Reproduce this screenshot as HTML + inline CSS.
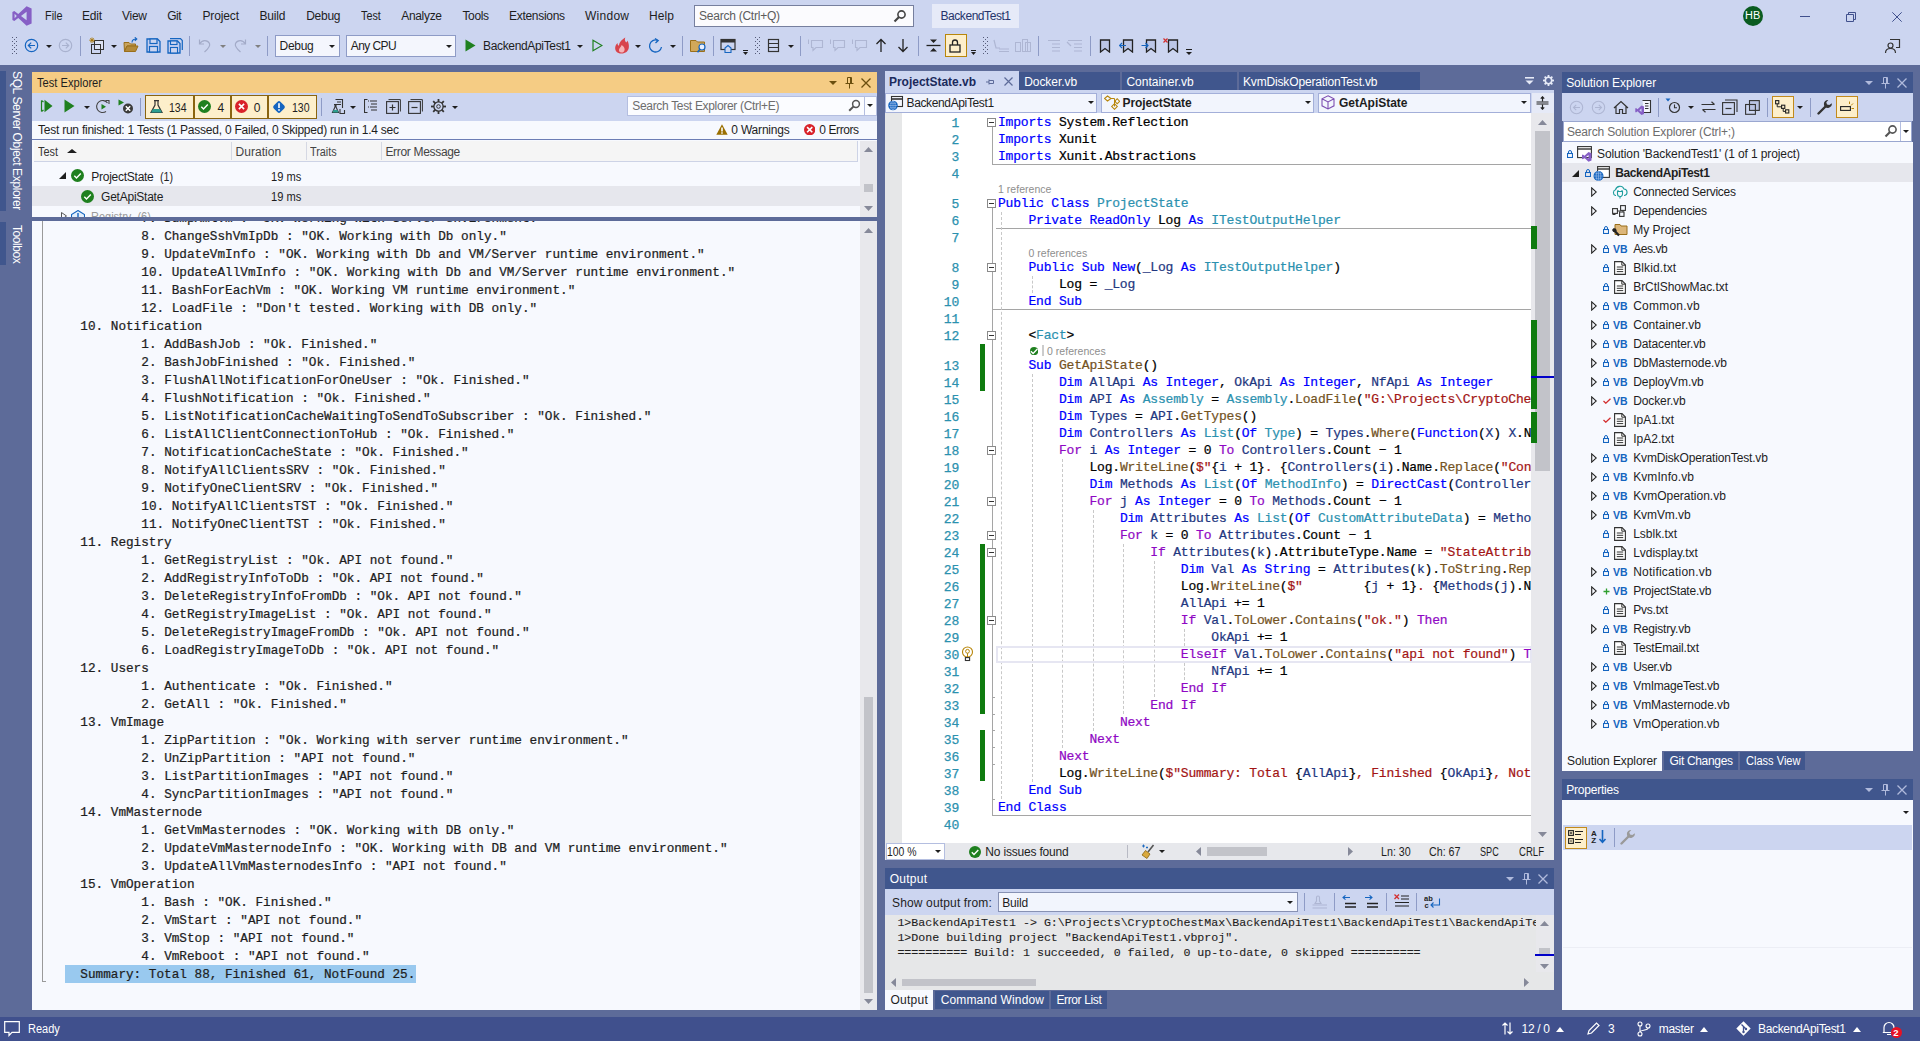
<!DOCTYPE html>
<html><head><meta charset="utf-8"><title>VS</title><style>
html,body{margin:0;padding:0;}
body{width:1920px;height:1041px;position:relative;overflow:hidden;background:#5D6B99;font-family:"Liberation Sans",sans-serif;font-size:12px;}
body div,body svg,.t{position:absolute;}
.t{white-space:nowrap;display:block;}
.ln{-webkit-text-stroke:0.25px;font-family:"Liberation Mono",monospace;font-size:13px;line-height:17px;letter-spacing:-0.2px;color:#2B91AF;text-align:right;}
.cl{-webkit-text-stroke:0.22px;font-family:"Liberation Mono",monospace;font-size:13px;line-height:17px;letter-spacing:-0.185px;color:#000;white-space:pre;}
.cl span{position:static;}
</style></head>
<body>
<div style="left:0px;top:65px;width:1920px;height:952px;background:#5D6B99;"></div>
<div style="left:0px;top:0px;width:1920px;height:65px;background:#CCD5F0;"></div>
<svg style="left:12px;top:6px;" width="20" height="20" viewBox="0 0 20 20"><path d="M14.6 0.3 L19.6 2.4 V17.6 L14.6 19.7 L6.3 11.9 L2.3 15 L0.4 14 V6 L2.3 5 L6.3 8.1 Z M14.6 5.7 L9 10 L14.6 14.3 Z M2.6 7.8 V12.2 L4.8 10 Z" fill="#865FC5" fill-rule="evenodd"/></svg>
<span class="t" style="left:44.5px;top:7.84px;font-size:12px;line-height:16px;color:#1e1e1e;transform:scaleX(0.9050);transform-origin:0 0;">File</span>
<span class="t" style="left:82px;top:7.84px;font-size:12px;line-height:16px;color:#1e1e1e;letter-spacing:-0.226px;">Edit</span>
<span class="t" style="left:122px;top:7.84px;font-size:12px;line-height:16px;color:#1e1e1e;letter-spacing:-0.265px;">View</span>
<span class="t" style="left:167.2px;top:7.84px;font-size:12px;line-height:16px;color:#1e1e1e;letter-spacing:-0.417px;">Git</span>
<span class="t" style="left:202.5px;top:7.84px;font-size:12px;line-height:16px;color:#1e1e1e;letter-spacing:-0.142px;">Project</span>
<span class="t" style="left:259.5px;top:7.84px;font-size:12px;line-height:16px;color:#1e1e1e;letter-spacing:-0.171px;">Build</span>
<span class="t" style="left:306.2px;top:7.84px;font-size:12px;line-height:16px;color:#1e1e1e;letter-spacing:-0.266px;">Debug</span>
<span class="t" style="left:361.2px;top:7.84px;font-size:12px;line-height:16px;color:#1e1e1e;transform:scaleX(0.8997);transform-origin:0 0;">Test</span>
<span class="t" style="left:401.2px;top:7.84px;font-size:12px;line-height:16px;color:#1e1e1e;letter-spacing:-0.315px;">Analyze</span>
<span class="t" style="left:462.5px;top:7.84px;font-size:12px;line-height:16px;color:#1e1e1e;letter-spacing:-0.379px;">Tools</span>
<span class="t" style="left:509px;top:7.84px;font-size:12px;line-height:16px;color:#1e1e1e;letter-spacing:-0.3px;">Extensions</span>
<span class="t" style="left:585px;top:7.84px;font-size:12px;line-height:16px;color:#1e1e1e;letter-spacing:0.264px;">Window</span>
<span class="t" style="left:649px;top:7.84px;font-size:12px;line-height:16px;color:#1e1e1e;letter-spacing:0.106px;">Help</span>
<div style="left:694px;top:5px;width:218px;height:20px;background:#FBFBFE;border:1px solid #767F9E;box-sizing:content-box;"></div>
<span class="t" style="left:699px;top:7.84px;font-size:12px;line-height:16px;color:#5c5c5c;letter-spacing:-0.24px;">Search (Ctrl+Q)</span>
<svg style="left:893px;top:9px;" width="14" height="14" viewBox="0 0 14 14"><circle cx="8.5" cy="5.5" r="3.6" fill="none" stroke="#444" stroke-width="1.6"/><path d="M6 8 L1.5 12.5" stroke="#444" stroke-width="2.2"/></svg>
<div style="left:932px;top:4px;width:87px;height:24px;background:#E6EAF8;"></div>
<span class="t" style="left:940.5px;top:7.84px;font-size:12px;line-height:16px;color:#25346B;letter-spacing:-0.444px;">BackendTest1</span>
<div style="left:1743px;top:6px;width:20px;height:20px;background:#0A5C20;border-radius:10px;"></div>
<span class="t" style="left:1745.3px;top:10.14px;font-size:10px;line-height:12px;color:#ffffff;transform:scaleX(1.0941);transform-origin:0 0;">HB</span>
<div style="left:1800px;top:16px;width:10px;height:1px;background:#40508D;"></div>
<svg style="left:1846px;top:12px;" width="10" height="10" viewBox="0 0 10 10"><path d="M0.5 2.5H7.5V9.5H0.5Z M2.5 2.5V0.5H9.5V7.5H7.5" fill="none" stroke="#40508D" stroke-width="1"/></svg>
<svg style="left:1892px;top:12px;" width="10" height="10" viewBox="0 0 10 10"><path d="M0.3 0.3L9.7 9.7M9.7 0.3L0.3 9.7" stroke="#40508D" stroke-width="1" fill="none"/></svg>
<svg style="left:12px;top:37px;" width="5" height="18" viewBox="0 0 5 18"><rect x="0" y="0" width="1" height="1" fill="#555b78"/><rect x="4" y="0" width="1" height="1" fill="#555b78" opacity="1"/><rect x="2" y="2" width="1" height="1" fill="#555b78"/><rect x="2" y="2" width="1" height="1" fill="#555b78" opacity="0"/><rect x="0" y="4" width="1" height="1" fill="#555b78"/><rect x="4" y="4" width="1" height="1" fill="#555b78" opacity="1"/><rect x="2" y="6" width="1" height="1" fill="#555b78"/><rect x="2" y="6" width="1" height="1" fill="#555b78" opacity="0"/><rect x="0" y="8" width="1" height="1" fill="#555b78"/><rect x="4" y="8" width="1" height="1" fill="#555b78" opacity="1"/><rect x="2" y="10" width="1" height="1" fill="#555b78"/><rect x="2" y="10" width="1" height="1" fill="#555b78" opacity="0"/><rect x="0" y="12" width="1" height="1" fill="#555b78"/><rect x="4" y="12" width="1" height="1" fill="#555b78" opacity="1"/><rect x="2" y="14" width="1" height="1" fill="#555b78"/><rect x="2" y="14" width="1" height="1" fill="#555b78" opacity="0"/><rect x="0" y="16" width="1" height="1" fill="#555b78"/><rect x="4" y="16" width="1" height="1" fill="#555b78" opacity="1"/></svg>
<svg style="left:24px;top:38px;" width="15" height="15" viewBox="0 0 15 15"><circle cx="7.5" cy="7.5" r="6.2" fill="none" stroke="#1565C0" stroke-width="1.2"/><path d="M11 7.5H4.5M7.2 4.6L4.3 7.5L7.2 10.4" fill="none" stroke="#1565C0" stroke-width="1.2"/></svg>
<svg style="left:46px;top:45px;" width="6" height="3" viewBox="0 0 6 3"><path d="M0 0H6L3.0 3Z" fill="#1e1e1e"/></svg>
<svg style="left:58px;top:38px;" width="15" height="15" viewBox="0 0 15 15"><circle cx="7.5" cy="7.5" r="6.2" fill="none" stroke="#A9B2CF" stroke-width="1.2"/><path d="M4 7.5H10.5M7.8 4.6L10.7 7.5L7.8 10.4" fill="none" stroke="#A9B2CF" stroke-width="1.2"/></svg>
<div style="left:80px;top:36px;width:1px;height:20px;background:#8E9BC6;"></div>
<svg style="left:89px;top:37px;" width="17" height="17" viewBox="0 0 17 17"><rect x="5.5" y="3.5" width="9" height="9" fill="#DDE2F3" stroke="#333" stroke-width="1"/><rect x="2.5" y="7.5" width="9" height="9" fill="none" stroke="#333" stroke-width="1"/><path d="M3 0.5V6M0.3 3.2H5.8M1.1 1.3L5 5.2M5 1.3L1.1 5.2" stroke="#A87400" stroke-width="0.9"/></svg>
<svg style="left:111px;top:45px;" width="6" height="3" viewBox="0 0 6 3"><path d="M0 0H6L3.0 3Z" fill="#1e1e1e"/></svg>
<svg style="left:123px;top:37px;" width="17" height="17" viewBox="0 0 17 17"><path d="M1 5.5H6L7.5 7H12.5V9H4L1.5 14.5Z" fill="#C9A45E" stroke="#9A6F1A" stroke-width="1"/><path d="M1.5 14.5L4 9H15L12.5 14.5Z" fill="#B38A3A" stroke="#9A6F1A" stroke-width="1"/><path d="M9 5.5C9 3 11 2 13.5 2M11.8 0.3L13.8 2L11.8 3.8" fill="none" stroke="#1565C0" stroke-width="1.1"/></svg>
<svg style="left:146px;top:38px;" width="15" height="15" viewBox="0 0 15 15"><path d="M1 1H11.5L14 3.5V14H1Z" fill="#C4CFF0" stroke="#1565C0" stroke-width="1.3"/><rect x="4" y="1" width="7" height="4.5" fill="#CCD5F0" stroke="#1565C0" stroke-width="1.2"/><rect x="3.5" y="8.5" width="8" height="5.5" fill="#CCD5F0" stroke="#1565C0" stroke-width="1.2"/></svg>
<svg style="left:167px;top:38px;" width="16" height="16" viewBox="0 0 16 16"><path d="M3 0.7H13.5L15.3 2.5V12" fill="none" stroke="#1565C0" stroke-width="1.2"/><path d="M1 3H10.5L13 5.5V15H1Z" fill="#C4CFF0" stroke="#1565C0" stroke-width="1.3"/><rect x="3.5" y="3" width="6.5" height="3.5" fill="#CCD5F0" stroke="#1565C0" stroke-width="1.1"/><rect x="3.5" y="9.5" width="7" height="5.5" fill="#CCD5F0" stroke="#1565C0" stroke-width="1.1"/></svg>
<div style="left:189px;top:36px;width:1px;height:20px;background:#8E9BC6;"></div>
<svg style="left:198px;top:38px;" width="14" height="15" viewBox="0 0 14 15"><path d="M1.5 1.5V6H6" fill="none" stroke="#A3ABC8" stroke-width="1.2"/><path d="M1.8 5.8C4 1.5 9.5 1.5 11.5 5.5C12.5 8 10 11 6.5 14" fill="none" stroke="#A3ABC8" stroke-width="1.2"/></svg>
<svg style="left:220px;top:45px;" width="6" height="3" viewBox="0 0 6 3"><path d="M0 0H6L3.0 3Z" fill="#808080"/></svg>
<svg style="left:233px;top:38px;" width="14" height="15" viewBox="0 0 14 15"><path d="M12.5 1.5V6H8" fill="none" stroke="#A3ABC8" stroke-width="1.2"/><path d="M12.2 5.8C10 1.5 4.5 1.5 2.5 5.5C1.5 8 4 11 7.5 14" fill="none" stroke="#A3ABC8" stroke-width="1.2"/></svg>
<svg style="left:255px;top:45px;" width="6" height="3" viewBox="0 0 6 3"><path d="M0 0H6L3.0 3Z" fill="#808080"/></svg>
<div style="left:267px;top:36px;width:1px;height:20px;background:#8E9BC6;"></div>
<div style="left:275px;top:35px;width:63px;height:20px;background:#F4F6FD;border:1px solid #8E9BC6;box-sizing:content-box;"></div>
<span class="t" style="left:279.5px;top:38.34px;font-size:12px;line-height:16px;color:#1e1e1e;letter-spacing:-0.291px;">Debug</span>
<svg style="left:329px;top:45px;" width="6" height="3" viewBox="0 0 6 3"><path d="M0 0H6L3.0 3Z" fill="#1e1e1e"/></svg>
<div style="left:346px;top:35px;width:108px;height:20px;background:#F4F6FD;border:1px solid #8E9BC6;box-sizing:content-box;"></div>
<span class="t" style="left:350.7px;top:38.34px;font-size:12px;line-height:16px;color:#1e1e1e;letter-spacing:-0.558px;">Any CPU</span>
<svg style="left:446px;top:45px;" width="6" height="3" viewBox="0 0 6 3"><path d="M0 0H6L3.0 3Z" fill="#1e1e1e"/></svg>
<svg style="left:465px;top:39px;" width="11" height="13" viewBox="0 0 11 13"><path d="M0.5 0.5L10.5 6.5L0.5 12.5Z" fill="#1F801F"/></svg>
<span class="t" style="left:483px;top:38.34px;font-size:12px;line-height:16px;color:#1e1e1e;letter-spacing:-0.338px;">BackendApiTest1</span>
<svg style="left:577px;top:45px;" width="6" height="3" viewBox="0 0 6 3"><path d="M0 0H6L3.0 3Z" fill="#1e1e1e"/></svg>
<svg style="left:592px;top:39px;" width="11" height="13" viewBox="0 0 11 13"><path d="M1 1.2L10 6.5L1 11.8Z" fill="none" stroke="#1F801F" stroke-width="1.2"/></svg>
<svg style="left:614px;top:37px;" width="16" height="17" viewBox="0 0 16 17"><path d="M7.5 16.6C3 16.6 0.8 13.5 1.2 10.2C1.5 8 2.8 6.8 3.6 6C3.4 7.6 4.2 8.6 5 8.6C5.2 5 8 2.8 11.3 0.6C10.5 2.6 10.8 4 12.2 5.6C13 4.8 13.2 4 13.2 3.4C14.6 5.4 15.2 8 14.8 10.8C14.3 14.2 11.6 16.6 7.5 16.6Z" fill="#D8444C"/><path d="M7.6 15.6C5.4 15.6 4.4 13.8 5.2 12C5.8 10.6 7.4 9.6 7.6 8C9.6 9.4 11 11.2 10.6 13C10.2 14.8 9 15.6 7.6 15.6Z" fill="#F5B5B8"/></svg>
<svg style="left:635px;top:45px;" width="6" height="3" viewBox="0 0 6 3"><path d="M0 0H6L3.0 3Z" fill="#1e1e1e"/></svg>
<svg style="left:648px;top:38px;" width="16" height="16" viewBox="0 0 16 16"><path d="M13.5 9A6 6 0 1 1 9.5 2.3" fill="none" stroke="#1565C0" stroke-width="1.3"/><path d="M7 0.5L10.2 2.5L7.5 5" fill="none" stroke="#1565C0" stroke-width="1.3"/></svg>
<svg style="left:670px;top:45px;" width="6" height="3" viewBox="0 0 6 3"><path d="M0 0H6L3.0 3Z" fill="#1e1e1e"/></svg>
<div style="left:682px;top:36px;width:1px;height:20px;background:#8E9BC6;"></div>
<svg style="left:690px;top:38px;" width="18" height="16" viewBox="0 0 18 16"><path d="M0.5 2.5H6L7.5 4H14.5V13.5H0.5Z" fill="#D1A85A" stroke="#9A6F1A" stroke-width="1"/><circle cx="12" cy="9" r="3" fill="#EAF0FF" stroke="#1565C0" stroke-width="1.2"/><path d="M10 11.2L7.5 14.2" stroke="#1565C0" stroke-width="1.6"/></svg>
<div style="left:713px;top:36px;width:1px;height:20px;background:#8E9BC6;"></div>
<svg style="left:720px;top:38px;" width="17" height="16" viewBox="0 0 17 16"><rect x="1" y="1.5" width="14" height="10" fill="none" stroke="#333" stroke-width="1.2"/><rect x="1" y="1.5" width="14" height="3" fill="#333"/><path d="M5 14.5V10L8 7.5L11 10V14.5Z" fill="#CCD5F0" stroke="#1565C0" stroke-width="1.1"/></svg>
<div style="left:743px;top:50px;width:5px;height:1px;background:#1e1e1e;"></div>
<svg style="left:743px;top:52px;" width="5" height="3" viewBox="0 0 5 3"><path d="M0 0H5L2.5 3Z" fill="#1e1e1e"/></svg>
<svg style="left:755px;top:37px;" width="5" height="18" viewBox="0 0 5 18"><rect x="0" y="0" width="1" height="1" fill="#555b78"/><rect x="4" y="0" width="1" height="1" fill="#555b78" opacity="1"/><rect x="2" y="2" width="1" height="1" fill="#555b78"/><rect x="2" y="2" width="1" height="1" fill="#555b78" opacity="0"/><rect x="0" y="4" width="1" height="1" fill="#555b78"/><rect x="4" y="4" width="1" height="1" fill="#555b78" opacity="1"/><rect x="2" y="6" width="1" height="1" fill="#555b78"/><rect x="2" y="6" width="1" height="1" fill="#555b78" opacity="0"/><rect x="0" y="8" width="1" height="1" fill="#555b78"/><rect x="4" y="8" width="1" height="1" fill="#555b78" opacity="1"/><rect x="2" y="10" width="1" height="1" fill="#555b78"/><rect x="2" y="10" width="1" height="1" fill="#555b78" opacity="0"/><rect x="0" y="12" width="1" height="1" fill="#555b78"/><rect x="4" y="12" width="1" height="1" fill="#555b78" opacity="1"/><rect x="2" y="14" width="1" height="1" fill="#555b78"/><rect x="2" y="14" width="1" height="1" fill="#555b78" opacity="0"/><rect x="0" y="16" width="1" height="1" fill="#555b78"/><rect x="4" y="16" width="1" height="1" fill="#555b78" opacity="1"/></svg>
<svg style="left:767px;top:38px;" width="14" height="16" viewBox="0 0 14 16"><rect x="1.5" y="1.5" width="10" height="12" fill="none" stroke="#333" stroke-width="1.2"/><path d="M1.5 5.5H11.5M1.5 9.5H11.5" stroke="#333" stroke-width="1.2"/></svg>
<svg style="left:788px;top:45px;" width="6" height="3" viewBox="0 0 6 3"><path d="M0 0H6L3.0 3Z" fill="#1e1e1e"/></svg>
<div style="left:800px;top:36px;width:1px;height:20px;background:#8E9BC6;"></div>
<svg style="left:808px;top:39px;" width="16" height="13" viewBox="0 0 16 13"><path d="M3.5 1.5H14.5V8.5H8L5 11.5V8.5H3.5Z" fill="none" stroke="#AEB6D3" stroke-width="1.1"/><path d="M0.5 0.5V5" stroke="#AEB6D3" stroke-width="1"/></svg>
<svg style="left:830px;top:39px;" width="16" height="13" viewBox="0 0 16 13"><path d="M3.5 1.5H14.5V8.5H8L5 11.5V8.5H3.5Z" fill="none" stroke="#AEB6D3" stroke-width="1.1"/><path d="M0.5 0.5V5" stroke="#AEB6D3" stroke-width="1"/></svg>
<svg style="left:852px;top:39px;" width="16" height="13" viewBox="0 0 16 13"><path d="M3.5 1.5H14.5V8.5H8L5 11.5V8.5H3.5Z" fill="none" stroke="#AEB6D3" stroke-width="1.1"/><path d="M0.5 0.5V5" stroke="#AEB6D3" stroke-width="1"/></svg>
<svg style="left:875px;top:38px;" width="12" height="15" viewBox="0 0 12 15"><path d="M6 14V1.5M1.5 6L6 1.5L10.5 6" fill="none" stroke="#222" stroke-width="1.3"/></svg>
<svg style="left:897px;top:38px;" width="12" height="15" viewBox="0 0 12 15"><path d="M6 1V13.5M1.5 9L6 13.5L10.5 9" fill="none" stroke="#222" stroke-width="1.3"/></svg>
<div style="left:918px;top:36px;width:1px;height:20px;background:#8E9BC6;"></div>
<svg style="left:926px;top:38px;" width="15" height="15" viewBox="0 0 15 15"><path d="M0.5 7.5H14.5" stroke="#222" stroke-width="1.3"/><path d="M4 1.5H11L7.5 5Z M4 13.5H11L7.5 10Z" fill="#222"/></svg>
<div style="left:945px;top:34px;width:20px;height:21px;background:#FDEFCB;border:1px solid #B8860B;box-sizing:content-box;"></div>
<svg style="left:949px;top:39px;" width="12" height="14" viewBox="0 0 12 14"><rect x="1" y="6" width="10" height="7" fill="none" stroke="#222" stroke-width="1.3"/><path d="M3.5 6V3.5A2.5 2.5 0 0 1 8.5 3.5V6" fill="none" stroke="#222" stroke-width="1.3"/></svg>
<div style="left:971px;top:50px;width:5px;height:1px;background:#1e1e1e;"></div>
<svg style="left:971px;top:52px;" width="5" height="3" viewBox="0 0 5 3"><path d="M0 0H5L2.5 3Z" fill="#1e1e1e"/></svg>
<svg style="left:983px;top:37px;" width="5" height="18" viewBox="0 0 5 18"><rect x="0" y="0" width="1" height="1" fill="#555b78"/><rect x="4" y="0" width="1" height="1" fill="#555b78" opacity="1"/><rect x="2" y="2" width="1" height="1" fill="#555b78"/><rect x="2" y="2" width="1" height="1" fill="#555b78" opacity="0"/><rect x="0" y="4" width="1" height="1" fill="#555b78"/><rect x="4" y="4" width="1" height="1" fill="#555b78" opacity="1"/><rect x="2" y="6" width="1" height="1" fill="#555b78"/><rect x="2" y="6" width="1" height="1" fill="#555b78" opacity="0"/><rect x="0" y="8" width="1" height="1" fill="#555b78"/><rect x="4" y="8" width="1" height="1" fill="#555b78" opacity="1"/><rect x="2" y="10" width="1" height="1" fill="#555b78"/><rect x="2" y="10" width="1" height="1" fill="#555b78" opacity="0"/><rect x="0" y="12" width="1" height="1" fill="#555b78"/><rect x="4" y="12" width="1" height="1" fill="#555b78" opacity="1"/><rect x="2" y="14" width="1" height="1" fill="#555b78"/><rect x="2" y="14" width="1" height="1" fill="#555b78" opacity="0"/><rect x="0" y="16" width="1" height="1" fill="#555b78"/><rect x="4" y="16" width="1" height="1" fill="#555b78" opacity="1"/></svg>
<svg style="left:993px;top:39px;" width="18" height="14" viewBox="0 0 18 14"><path d="M1 1L3 9H7" fill="none" stroke="#AEB6D3" stroke-width="1.2"/><path d="M6 10H16M6 12.5H16" stroke="#AEB6D3" stroke-width="1.2"/></svg>
<svg style="left:1015px;top:39px;" width="18" height="14" viewBox="0 0 18 14"><rect x="0.5" y="3.5" width="5" height="9" fill="none" stroke="#AEB6D3"/><rect x="7.5" y="0.5" width="5" height="12" fill="none" stroke="#AEB6D3"/><rect x="10.5" y="3.5" width="5" height="9" fill="none" stroke="#AEB6D3"/></svg>
<div style="left:1038px;top:36px;width:1px;height:20px;background:#8E9BC6;"></div>
<svg style="left:1045px;top:39px;" width="16" height="14" viewBox="0 0 16 14"><path d="M3 1.5H15M7 5H15M7 8.5H15M7 12H15" stroke="#AEB6D3" stroke-width="1.2"/></svg>
<svg style="left:1066px;top:39px;" width="17" height="14" viewBox="0 0 17 14"><path d="M2 1.5H16M8 5H16M8 8.5H16M8 12H16M1 3L5 7" stroke="#AEB6D3" stroke-width="1.2"/></svg>
<div style="left:1090px;top:36px;width:1px;height:20px;background:#8E9BC6;"></div>
<svg style="left:1099px;top:39px;" width="12" height="14" viewBox="0 0 12 14"><path d="M1.5 1H10.5V13L6 9.5L1.5 13Z" fill="#BCC6E6" stroke="#222" stroke-width="1.3"/></svg>
<svg style="left:1119px;top:39px;" width="16" height="14" viewBox="0 0 16 14"><path d="M4.5 1H13.5V13L9 9.5L4.5 13Z" fill="#BCC6E6" stroke="#222" stroke-width="1.3"/><path d="M7 6.5H0.5M3 4L0.5 6.5L3 9" fill="none" stroke="#1565C0" stroke-width="1.2"/></svg>
<svg style="left:1141px;top:39px;" width="16" height="14" viewBox="0 0 16 14"><path d="M5.5 1H14.5V13L10 9.5L5.5 13Z" fill="#BCC6E6" stroke="#222" stroke-width="1.3"/><path d="M0.5 6.5H7M4.5 4L7 6.5L4.5 9" fill="none" stroke="#1565C0" stroke-width="1.2"/></svg>
<svg style="left:1163px;top:38px;" width="16" height="15" viewBox="0 0 16 15"><path d="M5.5 2H14.5V14L10 10.5L5.5 14Z" fill="#BCC6E6" stroke="#222" stroke-width="1.3"/><path d="M0.5 0.5L4.5 4.5M4.5 0.5L0.5 4.5" stroke="#D32F2F" stroke-width="1.2"/></svg>
<div style="left:1186px;top:49px;width:6px;height:1px;background:#1e1e1e;"></div>
<svg style="left:1186px;top:52px;" width="6" height="3" viewBox="0 0 6 3"><path d="M0 0H6L3.0 3Z" fill="#1e1e1e"/></svg>
<svg style="left:1884px;top:38px;" width="17" height="16" viewBox="0 0 17 16"><path d="M6 1.5H15.5V9.5H12" fill="none" stroke="#333" stroke-width="1.2"/><circle cx="6.5" cy="7.5" r="2.5" fill="none" stroke="#333" stroke-width="1.2"/><path d="M1.5 15C1.5 11.5 4 10.5 6.5 10.5C9 10.5 11.5 11.5 11.5 15" fill="none" stroke="#333" stroke-width="1.2"/></svg>
<div style="left:0px;top:71px;width:6px;height:140px;background:#40568D;"></div>
<div style="left:0px;top:222px;width:6px;height:43px;background:#40568D;"></div>
<span class="t" style="left:9px;top:71.3px;font-size:12px;line-height:16px;color:#fff;writing-mode:vertical-rl;letter-spacing:-0.36px;">SQL Server Object Explorer</span>
<span class="t" style="left:9px;top:224.6px;font-size:12px;line-height:16px;color:#fff;writing-mode:vertical-rl;letter-spacing:-0.44px;">Toolbox</span>
<div style="left:32px;top:72px;width:845px;height:21px;background:#F5CC84;"></div>
<span class="t" style="left:36.8px;top:74.84px;font-size:12px;line-height:16px;color:#1e1e1e;transform:scaleX(0.9282);transform-origin:0 0;">Test Explorer</span>
<svg style="left:829px;top:80.5px;" width="8" height="4" viewBox="0 0 8 4"><path d="M0 0H8L4.0 4Z" fill="#6B4F0E"/></svg>
<svg style="left:845px;top:76.5px;" width="9" height="12" viewBox="0 0 9 12"><path d="M2.5 0.5H6.5V6.5H2.5ZM5.5 0.5V6.5M0.5 6.5H8.5M4.5 6.5V11.5" fill="none" stroke="#6B4F0E" stroke-width="1"/></svg>
<svg style="left:861px;top:77.5px;" width="10" height="10" viewBox="0 0 10 10"><path d="M0.5 0.5L9.5 9.5M9.5 0.5L0.5 9.5" stroke="#6B4F0E" stroke-width="1.3"/></svg>
<div style="left:32px;top:93px;width:845px;height:28px;background:#CCD5F0;"></div>
<svg style="left:40px;top:99px;" width="13" height="14" viewBox="0 0 13 14"><path d="M1.5 1.5V12.5M1.5 1.5L3.5 3M1.5 12.5L3.5 11" fill="none" stroke="#1F801F" stroke-width="1.2"/><path d="M4.5 0.8L12.5 7L4.5 13.2Z" fill="#1F801F"/></svg>
<svg style="left:64px;top:99px;" width="11" height="14" viewBox="0 0 11 14"><path d="M0.5 0.5L10.5 7L0.5 13.5Z" fill="#1F801F"/></svg>
<svg style="left:84px;top:106px;" width="6" height="3" viewBox="0 0 6 3"><path d="M0 0H6L3.0 3Z" fill="#1e1e1e"/></svg>
<svg style="left:96px;top:99px;" width="15" height="15" viewBox="0 0 15 15"><path d="M10 12.5A6 6 0 1 1 11.5 4" fill="none" stroke="#444" stroke-width="1.1"/><path d="M9.5 1.5H13V5" fill="none" stroke="#444" stroke-width="1.1"/><path d="M5.5 5L10 7.7L5.5 10.4Z" fill="#1F801F"/></svg>
<svg style="left:118px;top:99px;" width="16" height="15" viewBox="0 0 16 15"><path d="M0.5 0.5L6 3.5L0.5 6.5Z" fill="#1F801F"/><circle cx="10" cy="9.5" r="5" fill="#3a3a3a"/><path d="M7.8 7.3L12.2 11.7M12.2 7.3L7.8 11.7" stroke="#fff" stroke-width="1.5"/></svg>
<div style="left:140px;top:98px;width:1px;height:18px;background:#8E9BC6;"></div>
<div style="left:145px;top:95px;width:170px;height:22px;background:#FDEFCB;border:1px solid #8A6410;box-sizing:content-box;"></div>
<div style="left:193px;top:96px;width:2px;height:22px;background:#8A6410;"></div>
<div style="left:230px;top:96px;width:2px;height:22px;background:#8A6410;"></div>
<div style="left:267px;top:96px;width:2px;height:22px;background:#8A6410;"></div>
<svg style="left:150px;top:100px;" width="13" height="14" viewBox="0 0 13 14"><path d="M4 0.7H9M5 0.7V5L1 12.5H12L8 5V0.7" fill="none" stroke="#333" stroke-width="1.2"/><path d="M3 9H10L12 12.5H1Z" fill="#2E9E8F"/></svg>
<span class="t" style="left:168.6px;top:99.84px;font-size:12px;line-height:16px;color:#1e1e1e;transform:scaleX(0.8790);transform-origin:0 0;">134</span>
<svg style="left:198.0px;top:100.0px;" width="13.0" height="13.0" viewBox="0 0 13.0 13.0"><circle cx="6.5" cy="6.5" r="6.5" fill="#1F801F"/><path d="M3.3 6.7L5.5 8.9L9.8 4.5" fill="none" stroke="#fff" stroke-width="1.4"/></svg>
<span class="t" style="left:217.5px;top:99.84px;font-size:12px;line-height:16px;color:#1e1e1e;">4</span>
<svg style="left:235.0px;top:100.0px;" width="13.0" height="13.0" viewBox="0 0 13.0 13.0"><circle cx="6.5" cy="6.5" r="6.5" fill="#D9222A"/><path d="M3.9 3.9L9.1 9.1M9.1 3.9L3.9 9.1" fill="none" stroke="#fff" stroke-width="1.6"/></svg>
<span class="t" style="left:253.7px;top:99.84px;font-size:12px;line-height:16px;color:#1e1e1e;">0</span>
<svg style="left:271.5px;top:99.5px;" width="14" height="14" viewBox="0 0 14 14"><rect x="2.3" y="2.3" width="9.4" height="9.4" rx="2" fill="#1565C0" transform="rotate(45 7 7)"/><rect x="6.2" y="3.2" width="1.6" height="4.8" fill="#fff"/><rect x="6.2" y="9.2" width="1.6" height="1.6" fill="#fff"/></svg>
<span class="t" style="left:291.8px;top:99.84px;font-size:12px;line-height:16px;color:#1e1e1e;transform:scaleX(0.8790);transform-origin:0 0;">130</span>
<div style="left:321px;top:98px;width:1px;height:18px;background:#8E9BC6;"></div>
<svg style="left:331px;top:99px;" width="15" height="15" viewBox="0 0 15 15"><path d="M4.5 0.5H11.5V9" fill="none" stroke="#333" stroke-width="1.1"/><path d="M6 3H10M6 5.5H10" stroke="#333" stroke-width="1"/><path d="M3 5.5H6M4 5.5V8L1.5 13.5H7.5L5 8V5.5" fill="none" stroke="#333" stroke-width="1.1"/><path d="M2.5 11H6.5L7.5 13.5H1.5Z" fill="#2E9E8F"/><path d="M9 10V14.5H13.5V11" fill="none" stroke="#333" stroke-width="1.1"/></svg>
<svg style="left:350px;top:106px;" width="6" height="3" viewBox="0 0 6 3"><path d="M0 0H6L3.0 3Z" fill="#1e1e1e"/></svg>
<svg style="left:364px;top:99px;" width="14" height="14" viewBox="0 0 14 14"><path d="M3.5 0.5H0.5V13.5H3.5" fill="none" stroke="#333" stroke-width="1.1"/><path d="M6 2H13M7 5H13M6 8H13M7 11H13" stroke="#333" stroke-width="1.1"/><path d="M4 2H5M4 8H5" stroke="#333" stroke-width="1.1"/></svg>
<svg style="left:386px;top:99px;" width="15" height="15" viewBox="0 0 15 15"><rect x="0.6" y="2.6" width="11.8" height="11.8" fill="none" stroke="#333" stroke-width="1.1"/><path d="M2.5 0.6H14.4V12.5" fill="none" stroke="#333" stroke-width="1"/><path d="M3.5 8.5H9.5M6.5 5.5V11.5" stroke="#333" stroke-width="1.2"/></svg>
<svg style="left:408px;top:99px;" width="15" height="15" viewBox="0 0 15 15"><rect x="0.6" y="2.6" width="11.8" height="11.8" fill="none" stroke="#333" stroke-width="1.1"/><path d="M2.5 0.6H14.4V12.5" fill="none" stroke="#333" stroke-width="1"/><path d="M3.5 8.5H9.5" stroke="#333" stroke-width="1.2"/></svg>
<svg style="left:431px;top:99px;" width="15" height="15" viewBox="0 0 15 15"><rect x="6.6" y="0" width="1.8" height="3" fill="#333" transform="rotate(0 7.5 7.5)"/><rect x="6.6" y="0" width="1.8" height="3" fill="#333" transform="rotate(45 7.5 7.5)"/><rect x="6.6" y="0" width="1.8" height="3" fill="#333" transform="rotate(90 7.5 7.5)"/><rect x="6.6" y="0" width="1.8" height="3" fill="#333" transform="rotate(135 7.5 7.5)"/><rect x="6.6" y="0" width="1.8" height="3" fill="#333" transform="rotate(180 7.5 7.5)"/><rect x="6.6" y="0" width="1.8" height="3" fill="#333" transform="rotate(225 7.5 7.5)"/><rect x="6.6" y="0" width="1.8" height="3" fill="#333" transform="rotate(270 7.5 7.5)"/><rect x="6.6" y="0" width="1.8" height="3" fill="#333" transform="rotate(315 7.5 7.5)"/><circle cx="7.5" cy="7.5" r="4.6" fill="none" stroke="#333" stroke-width="1.3"/><circle cx="7.5" cy="7.5" r="1.8" fill="none" stroke="#333" stroke-width="1"/></svg>
<svg style="left:452px;top:106px;" width="6" height="3" viewBox="0 0 6 3"><path d="M0 0H6L3.0 3Z" fill="#1e1e1e"/></svg>
<div style="left:627px;top:96px;width:248px;height:18px;background:#FBFCFF;border:1px solid #B4BEE0;box-sizing:content-box;"></div>
<div style="left:864px;top:97px;width:1px;height:18px;background:#B4BEE0;"></div>
<span class="t" style="left:632.3px;top:97.84px;font-size:12px;line-height:16px;color:#6d6d6d;letter-spacing:-0.324px;">Search Test Explorer (Ctrl+E)</span>
<svg style="left:848px;top:99px;" width="13" height="13" viewBox="0 0 13 13"><circle cx="8" cy="5" r="3.4" fill="none" stroke="#555" stroke-width="1.5"/><path d="M5.6 7.4L1.2 11.8" stroke="#555" stroke-width="2"/></svg>
<svg style="left:867px;top:104px;" width="6" height="3" viewBox="0 0 6 3"><path d="M0 0H6L3.0 3Z" fill="#1e1e1e"/></svg>
<div style="left:32px;top:121px;width:845px;height:96px;background:#F7F9FE;"></div>
<span class="t" style="left:38px;top:121.84px;font-size:12px;line-height:16px;color:#1e1e1e;letter-spacing:-0.236px;">Test run finished: 1 Tests (1 Passed, 0 Failed, 0 Skipped) run in 1.4 sec</span>
<svg style="left:716px;top:124px;" width="12" height="11" viewBox="0 0 12 11"><path d="M6 0.3L11.7 10.7H0.3Z" fill="#9A6F00"/><rect x="5.2" y="3.5" width="1.6" height="4" fill="#fff"/><rect x="5.2" y="8.3" width="1.6" height="1.4" fill="#fff"/></svg>
<span class="t" style="left:731.3px;top:121.84px;font-size:12px;line-height:16px;color:#1e1e1e;letter-spacing:-0.194px;">0 Warnings</span>
<svg style="left:803.8px;top:123.8px;" width="11.4" height="11.4" viewBox="0 0 11.4 11.4"><circle cx="5.7" cy="5.7" r="5.7" fill="#D9222A"/><path d="M3.1 3.1L8.3 8.3M8.3 3.1L3.1 8.3" fill="none" stroke="#fff" stroke-width="1.6"/></svg>
<span class="t" style="left:819.3px;top:121.84px;font-size:12px;line-height:16px;color:#1e1e1e;letter-spacing:-0.411px;">0 Errors</span>
<div style="left:32px;top:139px;width:845px;height:1px;background:#6C7DB5;"></div>
<div style="left:34px;top:141px;width:824px;height:20px;background:#F5F5F5;border-bottom:1px solid #CDD3E6;"></div>
<div style="left:857px;top:141px;width:1px;height:20px;background:#CDD3E6;"></div>
<div style="left:231px;top:142px;width:1px;height:18px;background:#D5D8E3;"></div>
<div style="left:306px;top:142px;width:1px;height:18px;background:#D5D8E3;"></div>
<div style="left:381px;top:142px;width:1px;height:18px;background:#D5D8E3;"></div>
<span class="t" style="left:38.4px;top:143.84px;font-size:12px;line-height:16px;color:#333;transform:scaleX(0.9088);transform-origin:0 0;">Test</span>
<svg style="left:67px;top:149.3px;" width="10" height="4" viewBox="0 0 10 4"><path d="M0 4L5 0L10 4Z" fill="#1e1e1e"/></svg>
<span class="t" style="left:235.5px;top:143.84px;font-size:12px;line-height:16px;color:#444;letter-spacing:0.034px;">Duration</span>
<span class="t" style="left:310.4px;top:143.84px;font-size:12px;line-height:16px;color:#444;transform:scaleX(0.9034);transform-origin:0 0;">Traits</span>
<span class="t" style="left:385.4px;top:143.84px;font-size:12px;line-height:16px;color:#444;letter-spacing:-0.316px;">Error Message</span>
<div style="left:32px;top:162px;width:828px;height:55px;background:#F7F9FE;"></div>
<div style="left:32px;top:186px;width:828px;height:20px;background:#E6E7ED;"></div>
<svg style="left:59px;top:172px;" width="7" height="7" viewBox="0 0 7 7"><path d="M7 0V7H0Z" fill="#1e1e1e"/></svg>
<svg style="left:71.0px;top:169.0px;" width="13.0" height="13.0" viewBox="0 0 13.0 13.0"><circle cx="6.5" cy="6.5" r="6.5" fill="#1F801F"/><path d="M3.3 6.7L5.5 8.9L9.8 4.5" fill="none" stroke="#fff" stroke-width="1.4"/></svg>
<span class="t" style="left:91.3px;top:168.84px;font-size:12px;line-height:16px;color:#1e1e1e;letter-spacing:-0.261px;">ProjectState</span>
<span class="t" style="left:159.5px;top:168.84px;font-size:12px;line-height:16px;color:#1e1e1e;transform:scaleX(0.8863);transform-origin:0 0;">(1)</span>
<span class="t" style="left:270.5px;top:168.84px;font-size:12px;line-height:16px;color:#1e1e1e;transform:scaleX(0.9272);transform-origin:0 0;">19 ms</span>
<svg style="left:81.0px;top:189.5px;" width="13.0" height="13.0" viewBox="0 0 13.0 13.0"><circle cx="6.5" cy="6.5" r="6.5" fill="#1F801F"/><path d="M3.3 6.7L5.5 8.9L9.8 4.5" fill="none" stroke="#fff" stroke-width="1.4"/></svg>
<span class="t" style="left:101.1px;top:188.84px;font-size:12px;line-height:16px;color:#1e1e1e;letter-spacing:-0.241px;">GetApiState</span>
<span class="t" style="left:270.5px;top:188.84px;font-size:12px;line-height:16px;color:#1e1e1e;transform:scaleX(0.9272);transform-origin:0 0;">19 ms</span>
<div style="left:32px;top:206px;width:828px;height:11px;overflow:hidden;"><svg style="left:29px;top:6px;" width="7" height="8" viewBox="0 0 7 8"><path d="M0.5 0.5L5.5 4L0.5 7.5Z" fill="none" stroke="#555" stroke-width="1"/></svg><svg style="left:39px;top:4px;" width="14" height="14" viewBox="0 0 14 14"><path d="M7 0.5L13.5 4.5V9.5L7 13.5L0.5 9.5V4.5Z" fill="#E3EEFB" stroke="#1565C0" stroke-width="1.1"/><rect x="6.3" y="3" width="1.4" height="8" fill="#1565C0"/></svg><span class="t" style="left:59.3px;top:2.84px;font-size:12px;line-height:16px;color:#9a9a9a;white-space:pre;transform:scaleX(0.9167);transform-origin:0 0;">Registry  (6)</span></div>
<div style="left:860px;top:141px;width:17px;height:76px;background:#E8E8EC;"></div>
<svg style="left:864px;top:147px;" width="9" height="5" viewBox="0 0 9 5"><path d="M0 5L4.5 0L9 5Z" fill="#868999"/></svg>
<div style="left:864px;top:184px;width:9px;height:8px;background:#C2C3C9;"></div>
<svg style="left:864px;top:206px;" width="9" height="5" viewBox="0 0 9 5"><path d="M0 0L4.5 5L9 0Z" fill="#868999"/></svg>
<div style="left:32px;top:221px;width:845px;height:789px;background:#F7F9FE;"></div>
<div style="left:860px;top:221px;width:17px;height:789px;background:#E8E8EC;"></div>
<svg style="left:864px;top:228px;" width="9" height="5" viewBox="0 0 9 5"><path d="M0 5L4.5 0L9 5Z" fill="#868999"/></svg>
<div style="left:864px;top:697px;width:9px;height:296px;background:#C2C3C9;"></div>
<svg style="left:864px;top:999px;" width="9" height="5" viewBox="0 0 9 5"><path d="M0 0L4.5 5L9 0Z" fill="#868999"/></svg>
<div style="left:42px;top:221px;width:1px;height:760px;background:#9a9a9a;"></div>
<div style="left:42px;top:981px;width:4px;height:1px;background:#9a9a9a;"></div>
<div style="left:65px;top:965px;width:351px;height:18px;background:#99C9EF;"></div>
<div style="left:32px;top:221px;width:828px;height:789px;overflow:hidden;"><span class="t" style="left:109.30000000000001px;top:-11.38px;font-size:12.7px;line-height:18px;color:#1e1e1e;font-family:'Liberation Mono', monospace;-webkit-text-stroke:0.24px;white-space:pre;">7. DumpXmlVm : "OK. Working with Server environment."</span><span class="t" style="left:109.30000000000001px;top:6.62px;font-size:12.7px;line-height:18px;color:#1e1e1e;font-family:'Liberation Mono', monospace;-webkit-text-stroke:0.24px;white-space:pre;">8. ChangeSshVmIpDb : "OK. Working with Db only."</span><span class="t" style="left:109.30000000000001px;top:24.62px;font-size:12.7px;line-height:18px;color:#1e1e1e;font-family:'Liberation Mono', monospace;-webkit-text-stroke:0.24px;white-space:pre;">9. UpdateVmInfo : "OK. Working with Db and VM/Server runtime environment."</span><span class="t" style="left:109.30000000000001px;top:42.62px;font-size:12.7px;line-height:18px;color:#1e1e1e;font-family:'Liberation Mono', monospace;-webkit-text-stroke:0.24px;white-space:pre;">10. UpdateAllVmInfo : "OK. Working with Db and VM/Server runtime environment."</span><span class="t" style="left:109.30000000000001px;top:60.62px;font-size:12.7px;line-height:18px;color:#1e1e1e;font-family:'Liberation Mono', monospace;-webkit-text-stroke:0.24px;white-space:pre;">11. BashForEachVm : "OK. Working VM runtime environment."</span><span class="t" style="left:109.30000000000001px;top:78.62px;font-size:12.7px;line-height:18px;color:#1e1e1e;font-family:'Liberation Mono', monospace;-webkit-text-stroke:0.24px;white-space:pre;">12. LoadFile : "Don't tested. Working with DB only."</span><span class="t" style="left:48.33999999999999px;top:96.62px;font-size:12.7px;line-height:18px;color:#1e1e1e;font-family:'Liberation Mono', monospace;-webkit-text-stroke:0.24px;white-space:pre;">10. Notification</span><span class="t" style="left:109.30000000000001px;top:114.62px;font-size:12.7px;line-height:18px;color:#1e1e1e;font-family:'Liberation Mono', monospace;-webkit-text-stroke:0.24px;white-space:pre;">1. AddBashJob : "Ok. Finished."</span><span class="t" style="left:109.30000000000001px;top:132.62px;font-size:12.7px;line-height:18px;color:#1e1e1e;font-family:'Liberation Mono', monospace;-webkit-text-stroke:0.24px;white-space:pre;">2. BashJobFinished : "Ok. Finished."</span><span class="t" style="left:109.30000000000001px;top:150.62px;font-size:12.7px;line-height:18px;color:#1e1e1e;font-family:'Liberation Mono', monospace;-webkit-text-stroke:0.24px;white-space:pre;">3. FlushAllNotificationForOneUser : "Ok. Finished."</span><span class="t" style="left:109.30000000000001px;top:168.62px;font-size:12.7px;line-height:18px;color:#1e1e1e;font-family:'Liberation Mono', monospace;-webkit-text-stroke:0.24px;white-space:pre;">4. FlushNotification : "Ok. Finished."</span><span class="t" style="left:109.30000000000001px;top:186.62px;font-size:12.7px;line-height:18px;color:#1e1e1e;font-family:'Liberation Mono', monospace;-webkit-text-stroke:0.24px;white-space:pre;">5. ListNotificationCacheWaitingToSendToSubscriber : "Ok. Finished."</span><span class="t" style="left:109.30000000000001px;top:204.62px;font-size:12.7px;line-height:18px;color:#1e1e1e;font-family:'Liberation Mono', monospace;-webkit-text-stroke:0.24px;white-space:pre;">6. ListAllClientConnectionToHub : "Ok. Finished."</span><span class="t" style="left:109.30000000000001px;top:222.62px;font-size:12.7px;line-height:18px;color:#1e1e1e;font-family:'Liberation Mono', monospace;-webkit-text-stroke:0.24px;white-space:pre;">7. NotificationCacheState : "Ok. Finished."</span><span class="t" style="left:109.30000000000001px;top:240.62px;font-size:12.7px;line-height:18px;color:#1e1e1e;font-family:'Liberation Mono', monospace;-webkit-text-stroke:0.24px;white-space:pre;">8. NotifyAllClientsSRV : "Ok. Finished."</span><span class="t" style="left:109.30000000000001px;top:258.62px;font-size:12.7px;line-height:18px;color:#1e1e1e;font-family:'Liberation Mono', monospace;-webkit-text-stroke:0.24px;white-space:pre;">9. NotifyOneClientSRV : "Ok. Finished."</span><span class="t" style="left:109.30000000000001px;top:276.62px;font-size:12.7px;line-height:18px;color:#1e1e1e;font-family:'Liberation Mono', monospace;-webkit-text-stroke:0.24px;white-space:pre;">10. NotifyAllClientsTST : "Ok. Finished."</span><span class="t" style="left:109.30000000000001px;top:294.62px;font-size:12.7px;line-height:18px;color:#1e1e1e;font-family:'Liberation Mono', monospace;-webkit-text-stroke:0.24px;white-space:pre;">11. NotifyOneClientTST : "Ok. Finished."</span><span class="t" style="left:48.33999999999999px;top:312.62px;font-size:12.7px;line-height:18px;color:#1e1e1e;font-family:'Liberation Mono', monospace;-webkit-text-stroke:0.24px;white-space:pre;">11. Registry</span><span class="t" style="left:109.30000000000001px;top:330.62px;font-size:12.7px;line-height:18px;color:#1e1e1e;font-family:'Liberation Mono', monospace;-webkit-text-stroke:0.24px;white-space:pre;">1. GetRegistryList : "Ok. API not found."</span><span class="t" style="left:109.30000000000001px;top:348.62px;font-size:12.7px;line-height:18px;color:#1e1e1e;font-family:'Liberation Mono', monospace;-webkit-text-stroke:0.24px;white-space:pre;">2. AddRegistryInfoToDb : "Ok. API not found."</span><span class="t" style="left:109.30000000000001px;top:366.62px;font-size:12.7px;line-height:18px;color:#1e1e1e;font-family:'Liberation Mono', monospace;-webkit-text-stroke:0.24px;white-space:pre;">3. DeleteRegistryInfoFromDb : "Ok. API not found."</span><span class="t" style="left:109.30000000000001px;top:384.62px;font-size:12.7px;line-height:18px;color:#1e1e1e;font-family:'Liberation Mono', monospace;-webkit-text-stroke:0.24px;white-space:pre;">4. GetRegistryImageList : "Ok. API not found."</span><span class="t" style="left:109.30000000000001px;top:402.62px;font-size:12.7px;line-height:18px;color:#1e1e1e;font-family:'Liberation Mono', monospace;-webkit-text-stroke:0.24px;white-space:pre;">5. DeleteRegistryImageFromDb : "Ok. API not found."</span><span class="t" style="left:109.30000000000001px;top:420.62px;font-size:12.7px;line-height:18px;color:#1e1e1e;font-family:'Liberation Mono', monospace;-webkit-text-stroke:0.24px;white-space:pre;">6. LoadRegistryImageToDb : "Ok. API not found."</span><span class="t" style="left:48.33999999999999px;top:438.62px;font-size:12.7px;line-height:18px;color:#1e1e1e;font-family:'Liberation Mono', monospace;-webkit-text-stroke:0.24px;white-space:pre;">12. Users</span><span class="t" style="left:109.30000000000001px;top:456.62px;font-size:12.7px;line-height:18px;color:#1e1e1e;font-family:'Liberation Mono', monospace;-webkit-text-stroke:0.24px;white-space:pre;">1. Authenticate : "Ok. Finished."</span><span class="t" style="left:109.30000000000001px;top:474.62px;font-size:12.7px;line-height:18px;color:#1e1e1e;font-family:'Liberation Mono', monospace;-webkit-text-stroke:0.24px;white-space:pre;">2. GetAll : "Ok. Finished."</span><span class="t" style="left:48.33999999999999px;top:492.62px;font-size:12.7px;line-height:18px;color:#1e1e1e;font-family:'Liberation Mono', monospace;-webkit-text-stroke:0.24px;white-space:pre;">13. VmImage</span><span class="t" style="left:109.30000000000001px;top:510.62px;font-size:12.7px;line-height:18px;color:#1e1e1e;font-family:'Liberation Mono', monospace;-webkit-text-stroke:0.24px;white-space:pre;">1. ZipPartition : "Ok. Working with server runtime environment."</span><span class="t" style="left:109.30000000000001px;top:528.62px;font-size:12.7px;line-height:18px;color:#1e1e1e;font-family:'Liberation Mono', monospace;-webkit-text-stroke:0.24px;white-space:pre;">2. UnZipPartition : "API not found."</span><span class="t" style="left:109.30000000000001px;top:546.62px;font-size:12.7px;line-height:18px;color:#1e1e1e;font-family:'Liberation Mono', monospace;-webkit-text-stroke:0.24px;white-space:pre;">3. ListPartitionImages : "API not found."</span><span class="t" style="left:109.30000000000001px;top:564.62px;font-size:12.7px;line-height:18px;color:#1e1e1e;font-family:'Liberation Mono', monospace;-webkit-text-stroke:0.24px;white-space:pre;">4. SyncPartitionImages : "API not found."</span><span class="t" style="left:48.33999999999999px;top:582.62px;font-size:12.7px;line-height:18px;color:#1e1e1e;font-family:'Liberation Mono', monospace;-webkit-text-stroke:0.24px;white-space:pre;">14. VmMasternode</span><span class="t" style="left:109.30000000000001px;top:600.62px;font-size:12.7px;line-height:18px;color:#1e1e1e;font-family:'Liberation Mono', monospace;-webkit-text-stroke:0.24px;white-space:pre;">1. GetVmMasternodes : "OK. Working with DB only."</span><span class="t" style="left:109.30000000000001px;top:618.62px;font-size:12.7px;line-height:18px;color:#1e1e1e;font-family:'Liberation Mono', monospace;-webkit-text-stroke:0.24px;white-space:pre;">2. UpdateVmMasternodeInfo : "OK. Working with DB and VM runtime environment."</span><span class="t" style="left:109.30000000000001px;top:636.62px;font-size:12.7px;line-height:18px;color:#1e1e1e;font-family:'Liberation Mono', monospace;-webkit-text-stroke:0.24px;white-space:pre;">3. UpdateAllVmMasternodesInfo : "API not found."</span><span class="t" style="left:48.33999999999999px;top:654.62px;font-size:12.7px;line-height:18px;color:#1e1e1e;font-family:'Liberation Mono', monospace;-webkit-text-stroke:0.24px;white-space:pre;">15. VmOperation</span><span class="t" style="left:109.30000000000001px;top:672.62px;font-size:12.7px;line-height:18px;color:#1e1e1e;font-family:'Liberation Mono', monospace;-webkit-text-stroke:0.24px;white-space:pre;">1. Bash : "OK. Finished."</span><span class="t" style="left:109.30000000000001px;top:690.62px;font-size:12.7px;line-height:18px;color:#1e1e1e;font-family:'Liberation Mono', monospace;-webkit-text-stroke:0.24px;white-space:pre;">2. VmStart : "API not found."</span><span class="t" style="left:109.30000000000001px;top:708.62px;font-size:12.7px;line-height:18px;color:#1e1e1e;font-family:'Liberation Mono', monospace;-webkit-text-stroke:0.24px;white-space:pre;">3. VmStop : "API not found."</span><span class="t" style="left:109.30000000000001px;top:726.62px;font-size:12.7px;line-height:18px;color:#1e1e1e;font-family:'Liberation Mono', monospace;-webkit-text-stroke:0.24px;white-space:pre;">4. VmReboot : "API not found."</span><span class="t" style="left:48.33999999999999px;top:744.62px;font-size:12.7px;line-height:18px;color:#1e1e1e;font-family:'Liberation Mono', monospace;-webkit-text-stroke:0.24px;white-space:pre;">Summary: Total 88, Finished 61, NotFound 25.</span></div>
<div style="left:885px;top:71px;width:134px;height:21px;background:#CCD5F0;"></div>
<div style="left:885px;top:90px;width:669px;height:3px;background:#CCD5F0;"></div>
<span class="t" style="left:889px;top:73.84px;font-size:12px;line-height:16px;color:#1B2A5C;letter-spacing:-0.026px;font-weight:bold;">ProjectState.vb</span>
<svg style="left:986px;top:78px;" width="8" height="8" viewBox="0 0 8 8"><path d="M0 4H3M3 1.5V6.5M3 2.5H7.5V5.5H3" fill="none" stroke="#5D6B99" stroke-width="1"/></svg>
<svg style="left:1004px;top:77px;" width="9" height="9" viewBox="0 0 9 9"><path d="M0.5 0.5L8.5 8.5M8.5 0.5L0.5 8.5" stroke="#5D6B99" stroke-width="1.2"/></svg>
<div style="left:1019px;top:72px;width:101px;height:18px;background:#40568D;"></div>
<span class="t" style="left:1024.2px;top:73.84px;font-size:12px;line-height:16px;color:#ffffff;letter-spacing:-0.057px;">Docker.vb</span>
<div style="left:1122px;top:72px;width:115px;height:18px;background:#40568D;"></div>
<span class="t" style="left:1126.4px;top:73.84px;font-size:12px;line-height:16px;color:#ffffff;letter-spacing:0.002px;">Container.vb</span>
<div style="left:1239px;top:72px;width:181px;height:18px;background:#40568D;"></div>
<span class="t" style="left:1243px;top:73.84px;font-size:12px;line-height:16px;color:#ffffff;letter-spacing:-0.161px;">KvmDiskOperationTest.vb</span>
<svg style="left:1525px;top:77px;" width="9" height="8" viewBox="0 0 9 8"><path d="M0 0.8H9" stroke="#E6EAF7" stroke-width="1.6"/><path d="M0.5 3.5H8.5L4.5 7.5Z" fill="#E6EAF7"/></svg>
<svg style="left:1542.5px;top:74.5px;" width="11" height="11" viewBox="0 0 11 11"><rect x="4.6" y="0" width="1.8" height="2.6" fill="#E6EAF7" transform="rotate(0 5.5 5.5)"/><rect x="4.6" y="0" width="1.8" height="2.6" fill="#E6EAF7" transform="rotate(45 5.5 5.5)"/><rect x="4.6" y="0" width="1.8" height="2.6" fill="#E6EAF7" transform="rotate(90 5.5 5.5)"/><rect x="4.6" y="0" width="1.8" height="2.6" fill="#E6EAF7" transform="rotate(135 5.5 5.5)"/><rect x="4.6" y="0" width="1.8" height="2.6" fill="#E6EAF7" transform="rotate(180 5.5 5.5)"/><rect x="4.6" y="0" width="1.8" height="2.6" fill="#E6EAF7" transform="rotate(225 5.5 5.5)"/><rect x="4.6" y="0" width="1.8" height="2.6" fill="#E6EAF7" transform="rotate(270 5.5 5.5)"/><rect x="4.6" y="0" width="1.8" height="2.6" fill="#E6EAF7" transform="rotate(315 5.5 5.5)"/><circle cx="5.5" cy="5.5" r="3.2" fill="none" stroke="#E6EAF7" stroke-width="1.6"/></svg>
<div style="left:885px;top:93px;width:669px;height:20px;background:#CCD5F0;"></div>
<div style="left:885px;top:93px;width:210px;height:18px;background:#F2F5FD;border:1px solid #A3AFD9;box-sizing:content-box;"></div>
<div style="left:1101px;top:93px;width:211px;height:18px;background:#F2F5FD;border:1px solid #A3AFD9;box-sizing:content-box;"></div>
<div style="left:1318px;top:93px;width:211px;height:18px;background:#F2F5FD;border:1px solid #A3AFD9;box-sizing:content-box;"></div>
<svg style="left:888px;top:95px;" width="16" height="16" viewBox="0 0 16 16"><rect x="3.5" y="1.5" width="11" height="10" fill="#F4F6FD" stroke="#333" stroke-width="1.1"/><path d="M3.5 4H14.5" stroke="#333" stroke-width="1.6"/><circle cx="5" cy="10.5" r="4.8" fill="#1565C0"/><path d="M0.8 10.5H9.2M5 6.3V14.7M2 8.3H8M2 12.7H8" stroke="#C9D8F5" stroke-width="0.6" opacity="0.75"/><ellipse cx="5" cy="10.5" rx="2.2" ry="4.4" fill="none" stroke="#C9D8F5" stroke-width="0.6" opacity="0.75"/></svg>
<span class="t" style="left:906.5px;top:94.84px;font-size:12px;line-height:16px;color:#1e1e1e;letter-spacing:-0.366px;">BackendApiTest1</span>
<svg style="left:1088px;top:101px;" width="6" height="3" viewBox="0 0 6 3"><path d="M0 0H6L3.0 3Z" fill="#1e1e1e"/></svg>
<svg style="left:1104px;top:95px;" width="16" height="15" viewBox="0 0 16 15"><path d="M3.5 1L7 3.5L3.5 6L0.5 3.5Z" fill="none" stroke="#B8860B" stroke-width="1.1"/><path d="M7 3.5H10.5V11.5M10.5 6.5H12" fill="none" stroke="#B8860B" stroke-width="1"/><rect x="8.5" y="9.5" width="4" height="4" fill="none" stroke="#B8860B" transform="rotate(45 10.5 11.5)"/><rect x="11.5" y="4.5" width="3.5" height="3.5" fill="none" stroke="#B8860B" transform="rotate(45 13.2 6.2)"/></svg>
<span class="t" style="left:1122.5px;top:94.84px;font-size:12px;line-height:16px;color:#1e1e1e;letter-spacing:-0.075px;font-weight:bold;">ProjectState</span>
<svg style="left:1305px;top:101px;" width="6" height="3" viewBox="0 0 6 3"><path d="M0 0H6L3.0 3Z" fill="#1e1e1e"/></svg>
<svg style="left:1321px;top:95px;" width="14" height="15" viewBox="0 0 14 15"><path d="M7 0.8L13 3.8V10.8L7 14L1 10.8V3.8Z M1 3.8L7 7L13 3.8M7 7V14" fill="none" stroke="#7E4FB2" stroke-width="1.1"/></svg>
<span class="t" style="left:1339px;top:94.84px;font-size:12px;line-height:16px;color:#1e1e1e;letter-spacing:-0.018px;font-weight:bold;">GetApiState</span>
<svg style="left:1521px;top:101px;" width="6" height="3" viewBox="0 0 6 3"><path d="M0 0H6L3.0 3Z" fill="#1e1e1e"/></svg>
<div style="left:1532px;top:93px;width:22px;height:20px;background:#E6EAF7;"></div>
<svg style="left:1536px;top:96px;" width="13" height="14" viewBox="0 0 13 14"><path d="M0.5 6H12.5M0.5 8H12.5" stroke="#222" stroke-width="1"/><path d="M6.5 0.8V5.5M6.5 8.5V13.2M4.8 2.6L6.5 0.8L8.2 2.6M4.8 11.4L6.5 13.2L8.2 11.4" fill="none" stroke="#222" stroke-width="1.2"/></svg>
<div style="left:885px;top:113px;width:669px;height:730px;background:#FFFFFF;"></div>
<div style="left:885px;top:113px;width:17px;height:730px;background:#E6E7E8;"></div>
<div style="left:1531px;top:113px;width:23px;height:730px;background:#E8E8EC;"></div>
<svg style="left:1538px;top:120px;" width="9" height="5" viewBox="0 0 9 5"><path d="M0 5L4.5 0L9 5Z" fill="#868999"/></svg>
<div style="left:1535px;top:131px;width:15px;height:340px;background:#C2C3C9;"></div>
<svg style="left:1538px;top:832px;" width="9" height="5" viewBox="0 0 9 5"><path d="M0 0L4.5 5L9 0Z" fill="#868999"/></svg>
<div style="left:1531px;top:226px;width:5.5px;height:22.5px;background:#0F7B0F;"></div>
<div style="left:1531px;top:319.5px;width:5.5px;height:89.5px;background:#0F7B0F;"></div>
<div style="left:1531px;top:412px;width:5.5px;height:31px;background:#0F7B0F;"></div>
<div style="left:1531px;top:376px;width:23px;height:2px;background:#0000C8;"></div>
<div style="left:979.5px;top:343.5px;width:5.2px;height:47.0px;background:#0F7B0F;"></div>
<div style="left:979.5px;top:543.5px;width:5.2px;height:170.0px;background:#0F7B0F;"></div>
<div style="left:979.5px;top:729.5px;width:5.2px;height:51.0px;background:#0F7B0F;"></div>
<div style="left:991.5px;top:126px;width:1px;height:39px;background:#A5A5A5;"></div>
<div style="left:991.5px;top:164px;width:539.5px;height:1px;background:#A5A5A5;"></div>
<div style="left:991.5px;top:207px;width:1px;height:609px;background:#A5A5A5;"></div>
<div style="left:996px;top:228px;width:535px;height:1px;background:#A5A5A5;"></div>
<div style="left:991.5px;top:309px;width:539.5px;height:1px;background:#A5A5A5;"></div>
<div style="left:991.5px;top:815px;width:539.5px;height:1px;background:#A5A5A5;"></div>
<div style="left:992px;top:696.5px;width:3px;height:1px;background:#A5A5A5;"></div>
<div style="left:992px;top:713.5px;width:3px;height:1px;background:#A5A5A5;"></div>
<div style="left:992px;top:730px;width:3px;height:1px;background:#A5A5A5;"></div>
<div style="left:992px;top:747px;width:3px;height:1px;background:#A5A5A5;"></div>
<div style="left:992px;top:764px;width:3px;height:1px;background:#A5A5A5;"></div>
<div style="left:992px;top:798.5px;width:3px;height:1px;background:#A5A5A5;"></div>
<div style="left:1001.0px;top:211.5px;width:0;height:587.0px;border-left:1px dashed #C8C8C8;"></div>
<div style="left:1032.0px;top:275.5px;width:0;height:17.0px;border-left:1px dashed #C8C8C8;"></div>
<div style="left:1032.0px;top:373.5px;width:0;height:408.0px;border-left:1px dashed #C8C8C8;"></div>
<div style="left:1062.0px;top:458.5px;width:0;height:289.0px;border-left:1px dashed #C8C8C8;"></div>
<div style="left:1093.0px;top:509.5px;width:0;height:221.0px;border-left:1px dashed #C8C8C8;"></div>
<div style="left:1123.0px;top:543.5px;width:0;height:170.0px;border-left:1px dashed #C8C8C8;"></div>
<div style="left:1154.0px;top:560.5px;width:0;height:136.0px;border-left:1px dashed #C8C8C8;"></div>
<div style="left:1184.0px;top:628.5px;width:0;height:17.0px;border-left:1px dashed #C8C8C8;"></div>
<div style="left:1184.0px;top:662.5px;width:0;height:17.0px;border-left:1px dashed #C8C8C8;"></div>
<div style="left:996px;top:645.5px;width:536px;height:17px;border:2px solid #E6E6F2;box-sizing:border-box;"></div>
<div style="left:987px;top:117.5px;width:9px;height:9px;background:#fff;border:1px solid #8a8a8a;box-sizing:border-box;"></div>
<div style="left:989px;top:121.5px;width:5px;height:1px;background:#333;"></div>
<div style="left:987px;top:198.5px;width:9px;height:9px;background:#fff;border:1px solid #8a8a8a;box-sizing:border-box;"></div>
<div style="left:989px;top:202.5px;width:5px;height:1px;background:#333;"></div>
<div style="left:987px;top:262.5px;width:9px;height:9px;background:#fff;border:1px solid #8a8a8a;box-sizing:border-box;"></div>
<div style="left:989px;top:266.5px;width:5px;height:1px;background:#333;"></div>
<div style="left:987px;top:330.5px;width:9px;height:9px;background:#fff;border:1px solid #8a8a8a;box-sizing:border-box;"></div>
<div style="left:989px;top:334.5px;width:5px;height:1px;background:#333;"></div>
<div style="left:987px;top:445.5px;width:9px;height:9px;background:#fff;border:1px solid #8a8a8a;box-sizing:border-box;"></div>
<div style="left:989px;top:449.5px;width:5px;height:1px;background:#333;"></div>
<div style="left:987px;top:496.5px;width:9px;height:9px;background:#fff;border:1px solid #8a8a8a;box-sizing:border-box;"></div>
<div style="left:989px;top:500.5px;width:5px;height:1px;background:#333;"></div>
<div style="left:987px;top:530.5px;width:9px;height:9px;background:#fff;border:1px solid #8a8a8a;box-sizing:border-box;"></div>
<div style="left:989px;top:534.5px;width:5px;height:1px;background:#333;"></div>
<div style="left:987px;top:547.5px;width:9px;height:9px;background:#fff;border:1px solid #8a8a8a;box-sizing:border-box;"></div>
<div style="left:989px;top:551.5px;width:5px;height:1px;background:#333;"></div>
<div style="left:987px;top:615.5px;width:9px;height:9px;background:#fff;border:1px solid #8a8a8a;box-sizing:border-box;"></div>
<div style="left:989px;top:619.5px;width:5px;height:1px;background:#333;"></div>
<svg style="left:962px;top:646px;" width="12" height="16" viewBox="0 0 12 16"><circle cx="5.5" cy="6" r="5" fill="#fff" stroke="#B8860B" stroke-width="1.1"/><circle cx="5.5" cy="5.3" r="1.9" fill="none" stroke="#B8860B" stroke-width="1"/><path d="M5.5 7.2V11.5" stroke="#B8860B" stroke-width="1"/><rect x="3.4" y="11.6" width="4.2" height="2.9" fill="#fff" stroke="#333" stroke-width="1.1"/></svg>
<div style="left:885px;top:113px;width:646px;height:729px;overflow:hidden;"><span class="t ln" style="left:34px;top:1.5px;width:40px;">1</span><span class="t cl" style="left:113px;top:0.5px;"><span style="color:#0000FF">Imports</span> System.Reflection</span><span class="t ln" style="left:34px;top:18.5px;width:40px;">2</span><span class="t cl" style="left:113px;top:17.5px;"><span style="color:#0000FF">Imports</span> Xunit</span><span class="t ln" style="left:34px;top:35.5px;width:40px;">3</span><span class="t cl" style="left:113px;top:34.5px;"><span style="color:#0000FF">Imports</span> Xunit.Abstractions</span><span class="t ln" style="left:34px;top:52.5px;width:40px;">4</span><span class="t ln" style="left:34px;top:82.5px;width:40px;">5</span><span class="t cl" style="left:113px;top:81.5px;"><span style="color:#0000FF">Public Class </span><span style="color:#2B91AF">ProjectState</span></span><span class="t ln" style="left:34px;top:99.5px;width:40px;">6</span><span class="t cl" style="left:113px;top:98.5px;">    <span style="color:#0000FF">Private ReadOnly</span> Log <span style="color:#0000FF">As </span><span style="color:#2B91AF">ITestOutputHelper</span></span><span class="t ln" style="left:34px;top:116.5px;width:40px;">7</span><span class="t ln" style="left:34px;top:146.5px;width:40px;">8</span><span class="t cl" style="left:113px;top:145.5px;">    <span style="color:#0000FF">Public Sub New</span>(<span style="color:#1F377F">_Log</span><span style="color:#0000FF"> As </span><span style="color:#2B91AF">ITestOutputHelper</span>)</span><span class="t ln" style="left:34px;top:163.5px;width:40px;">9</span><span class="t cl" style="left:113px;top:162.5px;">        Log = <span style="color:#1F377F">_Log</span></span><span class="t ln" style="left:34px;top:180.5px;width:40px;">10</span><span class="t cl" style="left:113px;top:179.5px;">    <span style="color:#0000FF">End Sub</span></span><span class="t ln" style="left:34px;top:197.5px;width:40px;">11</span><span class="t ln" style="left:34px;top:214.5px;width:40px;">12</span><span class="t cl" style="left:113px;top:213.5px;">    &lt;<span style="color:#2B91AF">Fact</span>&gt;</span><span class="t ln" style="left:34px;top:244.5px;width:40px;">13</span><span class="t cl" style="left:113px;top:243.5px;">    <span style="color:#0000FF">Sub </span><span style="color:#74531F">GetApiState</span>()</span><span class="t ln" style="left:34px;top:261.5px;width:40px;">14</span><span class="t cl" style="left:113px;top:260.5px;">        <span style="color:#0000FF">Dim </span><span style="color:#1F377F">AllApi</span><span style="color:#0000FF"> As Integer</span>, <span style="color:#1F377F">OkApi</span><span style="color:#0000FF"> As Integer</span>, <span style="color:#1F377F">NfApi</span><span style="color:#0000FF"> As Integer</span></span><span class="t ln" style="left:34px;top:278.5px;width:40px;">15</span><span class="t cl" style="left:113px;top:277.5px;">        <span style="color:#0000FF">Dim </span><span style="color:#1F377F">API</span><span style="color:#0000FF"> As </span><span style="color:#2B91AF">Assembly</span> = <span style="color:#2B91AF">Assembly</span>.<span style="color:#74531F">LoadFile</span>(<span style="color:#A31515">"G:\Projects\CryptoChestMax</span></span><span class="t ln" style="left:34px;top:295.5px;width:40px;">16</span><span class="t cl" style="left:113px;top:294.5px;">        <span style="color:#0000FF">Dim </span><span style="color:#1F377F">Types</span> = <span style="color:#1F377F">API</span>.<span style="color:#74531F">GetTypes</span>()</span><span class="t ln" style="left:34px;top:312.5px;width:40px;">17</span><span class="t cl" style="left:113px;top:311.5px;">        <span style="color:#0000FF">Dim </span><span style="color:#1F377F">Controllers</span><span style="color:#0000FF"> As </span><span style="color:#2B91AF">List</span>(<span style="color:#0000FF">Of </span><span style="color:#2B91AF">Type</span>) = <span style="color:#1F377F">Types</span>.<span style="color:#74531F">Where</span>(<span style="color:#0000FF">Function</span>(<span style="color:#1F377F">X</span>) <span style="color:#1F377F">X</span>.Name</span><span class="t ln" style="left:34px;top:329.5px;width:40px;">18</span><span class="t cl" style="left:113px;top:328.5px;">        <span style="color:#8F08C4">For </span><span style="color:#1F377F">i</span><span style="color:#0000FF"> As Integer</span> = 0 <span style="color:#8F08C4">To </span><span style="color:#1F377F">Controllers</span>.Count − 1</span><span class="t ln" style="left:34px;top:346.5px;width:40px;">19</span><span class="t cl" style="left:113px;top:345.5px;">            Log.<span style="color:#74531F">WriteLine</span>(<span style="color:#A31515">$"</span>{<span style="color:#1F377F">i</span> + 1}<span style="color:#A31515">. </span>{<span style="color:#1F377F">Controllers</span>(<span style="color:#1F377F">i</span>).Name.<span style="color:#74531F">Replace</span>(<span style="color:#A31515">"Controller</span></span><span class="t ln" style="left:34px;top:363.5px;width:40px;">20</span><span class="t cl" style="left:113px;top:362.5px;">            <span style="color:#0000FF">Dim </span><span style="color:#1F377F">Methods</span><span style="color:#0000FF"> As </span><span style="color:#2B91AF">List</span>(<span style="color:#0000FF">Of </span><span style="color:#2B91AF">MethodInfo</span>) = <span style="color:#0000FF">DirectCast</span>(<span style="color:#1F377F">Controllers</span></span><span class="t ln" style="left:34px;top:380.5px;width:40px;">21</span><span class="t cl" style="left:113px;top:379.5px;">            <span style="color:#8F08C4">For </span><span style="color:#1F377F">j</span><span style="color:#0000FF"> As Integer</span> = 0 <span style="color:#8F08C4">To </span><span style="color:#1F377F">Methods</span>.Count − 1</span><span class="t ln" style="left:34px;top:397.5px;width:40px;">22</span><span class="t cl" style="left:113px;top:396.5px;">                <span style="color:#0000FF">Dim </span><span style="color:#1F377F">Attributes</span><span style="color:#0000FF"> As </span><span style="color:#2B91AF">List</span>(<span style="color:#0000FF">Of </span><span style="color:#2B91AF">CustomAttributeData</span>) = <span style="color:#1F377F">Methods</span></span><span class="t ln" style="left:34px;top:414.5px;width:40px;">23</span><span class="t cl" style="left:113px;top:413.5px;">                <span style="color:#8F08C4">For </span><span style="color:#1F377F">k</span> = 0 <span style="color:#8F08C4">To </span><span style="color:#1F377F">Attributes</span>.Count − 1</span><span class="t ln" style="left:34px;top:431.5px;width:40px;">24</span><span class="t cl" style="left:113px;top:430.5px;">                    <span style="color:#8F08C4">If </span><span style="color:#1F377F">Attributes</span>(<span style="color:#1F377F">k</span>).AttributeType.Name = <span style="color:#A31515">"StateAttribute"</span></span><span class="t ln" style="left:34px;top:448.5px;width:40px;">25</span><span class="t cl" style="left:113px;top:447.5px;">                        <span style="color:#0000FF">Dim </span><span style="color:#1F377F">Val</span><span style="color:#0000FF"> As String</span> = <span style="color:#1F377F">Attributes</span>(<span style="color:#1F377F">k</span>).<span style="color:#74531F">ToString</span>.<span style="color:#74531F">Replace</span></span><span class="t ln" style="left:34px;top:465.5px;width:40px;">26</span><span class="t cl" style="left:113px;top:464.5px;">                        Log.<span style="color:#74531F">WriteLine</span>(<span style="color:#A31515">$"        </span>{<span style="color:#1F377F">j</span> + 1}<span style="color:#A31515">. </span>{<span style="color:#1F377F">Methods</span>(<span style="color:#1F377F">j</span>).Name</span><span class="t ln" style="left:34px;top:482.5px;width:40px;">27</span><span class="t cl" style="left:113px;top:481.5px;">                        <span style="color:#1F377F">AllApi</span> += 1</span><span class="t ln" style="left:34px;top:499.5px;width:40px;">28</span><span class="t cl" style="left:113px;top:498.5px;">                        <span style="color:#8F08C4">If </span><span style="color:#1F377F">Val</span>.<span style="color:#74531F">ToLower</span>.<span style="color:#74531F">Contains</span>(<span style="color:#A31515">"ok."</span>) <span style="color:#8F08C4">Then</span></span><span class="t ln" style="left:34px;top:516.5px;width:40px;">29</span><span class="t cl" style="left:113px;top:515.5px;">                            <span style="color:#1F377F">OkApi</span> += 1</span><span class="t ln" style="left:34px;top:533.5px;width:40px;">30</span><span class="t cl" style="left:113px;top:532.5px;">                        <span style="color:#8F08C4">ElseIf </span><span style="color:#1F377F">Val</span>.<span style="color:#74531F">ToLower</span>.<span style="color:#74531F">Contains</span>(<span style="color:#A31515">"api not found"</span>) <span style="color:#8F08C4">Then</span></span><span class="t ln" style="left:34px;top:550.5px;width:40px;">31</span><span class="t cl" style="left:113px;top:549.5px;">                            <span style="color:#1F377F">NfApi</span> += 1</span><span class="t ln" style="left:34px;top:567.5px;width:40px;">32</span><span class="t cl" style="left:113px;top:566.5px;">                        <span style="color:#8F08C4">End If</span></span><span class="t ln" style="left:34px;top:584.5px;width:40px;">33</span><span class="t cl" style="left:113px;top:583.5px;">                    <span style="color:#8F08C4">End If</span></span><span class="t ln" style="left:34px;top:601.5px;width:40px;">34</span><span class="t cl" style="left:113px;top:600.5px;">                <span style="color:#8F08C4">Next</span></span><span class="t ln" style="left:34px;top:618.5px;width:40px;">35</span><span class="t cl" style="left:113px;top:617.5px;">            <span style="color:#8F08C4">Next</span></span><span class="t ln" style="left:34px;top:635.5px;width:40px;">36</span><span class="t cl" style="left:113px;top:634.5px;">        <span style="color:#8F08C4">Next</span></span><span class="t ln" style="left:34px;top:652.5px;width:40px;">37</span><span class="t cl" style="left:113px;top:651.5px;">        Log.<span style="color:#74531F">WriteLine</span>(<span style="color:#A31515">$"Summary: Total </span>{<span style="color:#1F377F">AllApi</span>}<span style="color:#A31515">, Finished </span>{<span style="color:#1F377F">OkApi</span>}<span style="color:#A31515">, NotFound</span></span><span class="t ln" style="left:34px;top:669.5px;width:40px;">38</span><span class="t cl" style="left:113px;top:668.5px;">    <span style="color:#0000FF">End Sub</span></span><span class="t ln" style="left:34px;top:686.5px;width:40px;">39</span><span class="t cl" style="left:113px;top:685.5px;"><span style="color:#0000FF">End Class</span></span><span class="t ln" style="left:34px;top:703.5px;width:40px;">40</span><span class="t" style="left:113px;top:69.86px;font-size:10.5px;line-height:13px;color:#8E8E8E;letter-spacing:0.028px;">1 reference</span><span class="t" style="left:143.5px;top:133.86px;font-size:10.5px;line-height:13px;color:#8E8E8E;letter-spacing:0.03px;">0 references</span><span class="t" style="left:162px;top:231.86px;font-size:10.5px;line-height:13px;color:#8E8E8E;letter-spacing:0.03px;">0 references</span><div style="left:157px;top:232px;width:2px;height:11px;background:#CCCCCC;"></div><svg style="left:144.49999999999991px;top:234.1px;" width="8.2" height="8.2" viewBox="0 0 8.2 8.2"><circle cx="4.1" cy="4.1" r="4.1" fill="#1F801F"/><path d="M0.8999999999999995 4.3L3.0999999999999996 6.5L7.3999999999999995 2.0999999999999996" fill="none" stroke="#fff" stroke-width="1.4"/></svg></div>
<div style="left:885px;top:843px;width:669px;height:17px;background:#E7E8EC;"></div>
<div style="left:886px;top:843px;width:57px;height:15px;background:#FFFFFF;border:1px solid #B4BEE0;box-sizing:content-box;"></div>
<span class="t" style="left:887.4px;top:843.84px;font-size:12px;line-height:16px;color:#1e1e1e;transform:scaleX(0.8699);transform-origin:0 0;">100 %</span>
<svg style="left:935px;top:850px;" width="6" height="3" viewBox="0 0 6 3"><path d="M0 0H6L3.0 3Z" fill="#1e1e1e"/></svg>
<svg style="left:969px;top:845.5px;" width="12" height="12" viewBox="0 0 12 12"><circle cx="6" cy="6" r="6" fill="#1F801F"/><path d="M2.8 6.2L5 8.4L9.3 4" fill="none" stroke="#fff" stroke-width="1.4"/></svg>
<span class="t" style="left:985.3px;top:844.14px;font-size:12px;line-height:16px;color:#1e1e1e;letter-spacing:-0.189px;">No issues found</span>
<div style="left:1127px;top:845px;width:1px;height:13px;background:#B8BAC4;"></div>
<svg style="left:1141px;top:844px;" width="15" height="15" viewBox="0 0 15 15"><path d="M12.5 1L7 8" stroke="#555" stroke-width="1.6"/><path d="M4.5 6.5L9 10L6 14.5L1 11Z" fill="#D9A93E" stroke="#8A6410" stroke-width="0.8"/><path d="M2.5 0.5V3.5M1 2H4M6 2.5V4.5M5 3.5H7" stroke="#1565C0" stroke-width="0.9"/></svg>
<svg style="left:1159px;top:850px;" width="6" height="3" viewBox="0 0 6 3"><path d="M0 0H6L3.0 3Z" fill="#1e1e1e"/></svg>
<svg style="left:1196px;top:847px;" width="5" height="9" viewBox="0 0 5 9"><path d="M5 0L0 4.5L5 9Z" fill="#868999"/></svg>
<div style="left:1207px;top:847px;width:60px;height:9px;background:#C2C3C9;"></div>
<svg style="left:1348px;top:847px;" width="5" height="9" viewBox="0 0 5 9"><path d="M0 0L5 4.5L0 9Z" fill="#868999"/></svg>
<span class="t" style="left:1381.3px;top:844.14px;font-size:12px;line-height:16px;color:#1e1e1e;transform:scaleX(0.8902);transform-origin:0 0;">Ln: 30</span>
<span class="t" style="left:1429.3px;top:844.14px;font-size:12px;line-height:16px;color:#1e1e1e;transform:scaleX(0.8909);transform-origin:0 0;">Ch: 67</span>
<span class="t" style="left:1480px;top:844.14px;font-size:12px;line-height:16px;color:#1e1e1e;transform:scaleX(0.7579);transform-origin:0 0;">SPC</span>
<span class="t" style="left:1519px;top:844.14px;font-size:12px;line-height:16px;color:#1e1e1e;transform:scaleX(0.7978);transform-origin:0 0;">CRLF</span>
<div style="left:885px;top:868px;width:669px;height:21px;background:#40568D;"></div>
<span class="t" style="left:889.7px;top:870.84px;font-size:12px;line-height:16px;color:#ffffff;letter-spacing:0.255px;">Output</span>
<svg style="left:1506px;top:876.5px;" width="8" height="4" viewBox="0 0 8 4"><path d="M0 0H8L4.0 4Z" fill="#B0BADC"/></svg>
<svg style="left:1522px;top:872.5px;" width="9" height="12" viewBox="0 0 9 12"><path d="M2.5 0.5H6.5V6.5H2.5ZM5.5 0.5V6.5M0.5 6.5H8.5M4.5 6.5V11.5" fill="none" stroke="#B0BADC" stroke-width="1"/></svg>
<svg style="left:1538px;top:873.5px;" width="10" height="10" viewBox="0 0 10 10"><path d="M0.5 0.5L9.5 9.5M9.5 0.5L0.5 9.5" stroke="#B0BADC" stroke-width="1.3"/></svg>
<div style="left:885px;top:889px;width:669px;height:26px;background:#CCD5F0;"></div>
<span class="t" style="left:892px;top:894.84px;font-size:12px;line-height:16px;color:#1e1e1e;letter-spacing:0.151px;">Show output from:</span>
<div style="left:998px;top:892px;width:298px;height:18px;background:#F2F5FD;border:1px solid #8791B3;box-sizing:content-box;"></div>
<span class="t" style="left:1002.3px;top:894.84px;font-size:12px;line-height:16px;color:#1e1e1e;letter-spacing:-0.196px;">Build</span>
<svg style="left:1287px;top:901px;" width="6" height="3" viewBox="0 0 6 3"><path d="M0 0H6L3.0 3Z" fill="#1e1e1e"/></svg>
<div style="left:1304px;top:893px;width:1px;height:18px;background:#8E9BC6;"></div>
<div style="left:1334px;top:893px;width:1px;height:18px;background:#8E9BC6;"></div>
<div style="left:1386px;top:893px;width:1px;height:18px;background:#8E9BC6;"></div>
<div style="left:1416px;top:893px;width:1px;height:18px;background:#8E9BC6;"></div>
<svg style="left:1312px;top:895px;" width="16" height="14" viewBox="0 0 16 14"><path d="M4.5 6V2.5A1.5 1.5 0 0 1 7.5 2.5V6L9 8.5H3Z" fill="none" stroke="#AEB6D3" stroke-width="1.1"/><path d="M0.5 10H15M0.5 13H15" stroke="#AEB6D3" stroke-width="1.2"/></svg>
<svg style="left:1342px;top:895px;" width="15" height="14" viewBox="0 0 15 14"><path d="M8 2.5H1M3.5 0.3L1 2.5L3.5 4.7" fill="none" stroke="#1565C0" stroke-width="1.1"/><path d="M3 8.5H14M3 12H14" stroke="#222" stroke-width="1.6"/></svg>
<svg style="left:1364px;top:895px;" width="15" height="14" viewBox="0 0 15 14"><path d="M1 2.5H8M5.5 0.3L8 2.5L5.5 4.7" fill="none" stroke="#1565C0" stroke-width="1.1"/><path d="M3 8.5H14M3 12H14" stroke="#222" stroke-width="1.6"/></svg>
<svg style="left:1394px;top:894px;" width="16" height="15" viewBox="0 0 16 15"><path d="M0.5 0.5L5 5M5 0.5L0.5 5" stroke="#D32F2F" stroke-width="1.3"/><path d="M7 2H15M7 5H15M1 8.5H15M1 12H15" stroke="#222" stroke-width="1.2"/></svg>
<svg style="left:1424px;top:894px;" width="17" height="15" viewBox="0 0 17 15"><text x="0" y="6.5" font-family="Liberation Sans" font-size="7.5" font-weight="bold" fill="#222">ab</text><text x="0.5" y="13.5" font-family="Liberation Sans" font-size="7.5" font-weight="bold" fill="#222">c</text><path d="M15.5 4.5V11H7M9.5 8.5L7 11L9.5 13.5" fill="none" stroke="#1565C0" stroke-width="1.1"/></svg>
<div style="left:885px;top:915px;width:669px;height:75px;background:#E6E7E8;"></div>
<div style="left:1536px;top:915px;width:18px;height:57px;background:#E8E8EC;"></div>
<svg style="left:1540px;top:921px;" width="9" height="5" viewBox="0 0 9 5"><path d="M0 5L4.5 0L9 5Z" fill="#868999"/></svg>
<div style="left:1539px;top:947.5px;width:11px;height:8px;background:#C2C3C9;"></div>
<div style="left:1535px;top:954px;width:19px;height:2px;background:#0000C8;"></div>
<svg style="left:1540px;top:964px;" width="9" height="5" viewBox="0 0 9 5"><path d="M0 0L4.5 5L9 0Z" fill="#868999"/></svg>
<div style="left:885px;top:915px;width:650.5px;height:57px;overflow:hidden;"><span class="t" style="left:12.399999999999977px;top:0.40px;font-size:11.64px;line-height:15px;color:#1e1e1e;font-family:'Liberation Mono', monospace;-webkit-text-stroke:0.24px;white-space:pre;-webkit-text-stroke:0.1px;">1&gt;BackendApiTest1 -&gt; G:\Projects\CryptoChestMax\BackendApiTest1\BackendApiTest1\BackendApiTest1\bin</span><span class="t" style="left:12.399999999999977px;top:15.40px;font-size:11.64px;line-height:15px;color:#1e1e1e;font-family:'Liberation Mono', monospace;-webkit-text-stroke:0.24px;white-space:pre;-webkit-text-stroke:0.1px;">1&gt;Done building project "BackendApiTest1.vbproj".</span><span class="t" style="left:12.399999999999977px;top:30.40px;font-size:11.64px;line-height:15px;color:#1e1e1e;font-family:'Liberation Mono', monospace;-webkit-text-stroke:0.24px;white-space:pre;-webkit-text-stroke:0.1px;">========== Build: 1 succeeded, 0 failed, 0 up-to-date, 0 skipped ==========</span></div>
<svg style="left:891px;top:978px;" width="5" height="9" viewBox="0 0 5 9"><path d="M5 0L0 4.5L5 9Z" fill="#868999"/></svg>
<div style="left:902px;top:979px;width:134px;height:7px;background:#C2C3C9;"></div>
<svg style="left:1524px;top:978px;" width="5" height="9" viewBox="0 0 5 9"><path d="M0 0L5 4.5L0 9Z" fill="#868999"/></svg>
<div style="left:885px;top:990px;width:48px;height:20px;background:#F7F9FE;"></div>
<span class="t" style="left:890.4px;top:991.84px;font-size:12px;line-height:16px;color:#1e1e1e;letter-spacing:0.295px;">Output</span>
<div style="left:935px;top:991px;width:114px;height:18px;background:#40568D;"></div>
<span class="t" style="left:940.7px;top:991.84px;font-size:12px;line-height:16px;color:#ffffff;letter-spacing:0.148px;">Command Window</span>
<div style="left:1051px;top:991px;width:56px;height:18px;background:#40568D;"></div>
<span class="t" style="left:1056.4px;top:991.84px;font-size:12px;line-height:16px;color:#ffffff;letter-spacing:-0.364px;">Error List</span>
<div style="left:1562px;top:72px;width:351px;height:21px;background:#40568D;"></div>
<span class="t" style="left:1566.2px;top:74.84px;font-size:12px;line-height:16px;color:#ffffff;letter-spacing:-0.087px;">Solution Explorer</span>
<svg style="left:1865px;top:80.5px;" width="8" height="4" viewBox="0 0 8 4"><path d="M0 0H8L4.0 4Z" fill="#B0BADC"/></svg>
<svg style="left:1881px;top:76.5px;" width="9" height="12" viewBox="0 0 9 12"><path d="M2.5 0.5H6.5V6.5H2.5ZM5.5 0.5V6.5M0.5 6.5H8.5M4.5 6.5V11.5" fill="none" stroke="#B0BADC" stroke-width="1"/></svg>
<svg style="left:1897px;top:77.5px;" width="10" height="10" viewBox="0 0 10 10"><path d="M0.5 0.5L9.5 9.5M9.5 0.5L0.5 9.5" stroke="#B0BADC" stroke-width="1.3"/></svg>
<div style="left:1562px;top:93px;width:351px;height:28px;background:#CCD5F0;"></div>
<svg style="left:1569px;top:100px;" width="15" height="15" viewBox="0 0 15 15"><circle cx="7.5" cy="7.5" r="6.2" fill="none" stroke="#AEB6D3" stroke-width="1.1"/><path d="M11 7.5H4.5M7.2 4.8L4.5 7.5L7.2 10.2" fill="none" stroke="#AEB6D3" stroke-width="1.1"/></svg>
<svg style="left:1591px;top:100px;" width="15" height="15" viewBox="0 0 15 15"><circle cx="7.5" cy="7.5" r="6.2" fill="none" stroke="#AEB6D3" stroke-width="1.1"/><path d="M4 7.5H10.5M7.8 4.8L10.5 7.5L7.8 10.2" fill="none" stroke="#AEB6D3" stroke-width="1.1"/></svg>
<svg style="left:1613px;top:100px;" width="16" height="15" viewBox="0 0 16 15"><path d="M1 8L8 1.5L15 8M3 6.5V13.5H6.5V9.5H9.5V13.5H13V6.5" fill="none" stroke="#333" stroke-width="1.2"/></svg>
<svg style="left:1635px;top:99px;" width="17" height="17" viewBox="0 0 17 17"><path d="M7.5 1.5H15.5V13.5H9" fill="#F4F6FD" stroke="#333" stroke-width="1.1"/><path d="M10 4.5H13.5M10 7H13.5M10 9.5H13.5" stroke="#333" stroke-width="1"/><path d="M6.5 6.5L9 7.5V15L6.5 16L2.5 12.3L1 13.5L0.3 13V9.5L1 9L2.5 10.2Z M6.5 9.5L4.3 11.2L6.5 13Z" fill="#865FC5" fill-rule="evenodd"/></svg>
<div style="left:1657.5px;top:98px;width:1px;height:19px;background:#8E9BC6;"></div>
<svg style="left:1665px;top:98px;" width="17" height="17" viewBox="0 0 17 17"><circle cx="9.5" cy="9.5" r="5" fill="none" stroke="#333" stroke-width="1.2"/><path d="M9.5 6.5V9.8H12" fill="none" stroke="#333" stroke-width="1.1"/><path d="M0.5 0.5H5.5L3 3.5Z" fill="#1565C0"/></svg>
<svg style="left:1688px;top:106px;" width="6" height="3" viewBox="0 0 6 3"><path d="M0 0H6L3.0 3Z" fill="#1e1e1e"/></svg>
<svg style="left:1701px;top:101px;" width="15" height="12" viewBox="0 0 15 12"><path d="M0.5 3.5H13.5M10.5 0.8L13.5 3.5M14.5 8.5H1.5M4.5 11.2L1.5 8.5" fill="none" stroke="#333" stroke-width="1.2"/></svg>
<svg style="left:1722px;top:99px;" width="16" height="16" viewBox="0 0 16 16"><rect x="0.6" y="3.6" width="11.8" height="11.8" fill="none" stroke="#333" stroke-width="1.1"/><path d="M3 1H15V13" fill="none" stroke="#333" stroke-width="1.1"/><path d="M3.5 9.5H9.5" stroke="#333" stroke-width="1.2"/></svg>
<svg style="left:1745px;top:100px;" width="15" height="15" viewBox="0 0 15 15"><rect x="4.5" y="0.6" width="9.8" height="9.8" fill="#B9C3E3" stroke="#333" stroke-width="1.1"/><rect x="0.6" y="4.5" width="9.8" height="9.8" fill="none" stroke="#333" stroke-width="1.1"/></svg>
<div style="left:1766.5px;top:98px;width:1px;height:19px;background:#8E9BC6;"></div>
<div style="left:1772px;top:96px;width:20px;height:20px;background:#FDEFCB;border:1px solid #C28A1C;box-sizing:content-box;"></div>
<svg style="left:1775px;top:100px;" width="15" height="14" viewBox="0 0 15 14"><rect x="0.6" y="0.6" width="3.2" height="3.2" fill="none" stroke="#222" stroke-width="1.1"/><rect x="6.6" y="5.2" width="3.2" height="3.2" fill="none" stroke="#222" stroke-width="1.1"/><rect x="10.6" y="9.8" width="3.2" height="3.2" fill="none" stroke="#222" stroke-width="1.1"/><path d="M2.2 4V6.8H6.5M8.2 8.5V11.4H10.5" fill="none" stroke="#222" stroke-width="1"/></svg>
<svg style="left:1797px;top:106px;" width="6" height="3" viewBox="0 0 6 3"><path d="M0 0H6L3.0 3Z" fill="#1e1e1e"/></svg>
<div style="left:1809.5px;top:98px;width:1px;height:19px;background:#8E9BC6;"></div>
<svg style="left:1817px;top:99px;" width="16" height="16" viewBox="0 0 16 16"><path d="M1.5 14.5L8.5 7.5" stroke="#333" stroke-width="2.4" stroke-linecap="round"/><path d="M14.8 4.2A4 4 0 1 1 11.3 1L9.3 3.3L10 5.5L12.3 6Z" fill="#333"/></svg>
<div style="left:1836px;top:96px;width:20px;height:20px;background:#FDEFCB;border:1px solid #C28A1C;box-sizing:content-box;"></div>
<svg style="left:1840px;top:100px;" width="16" height="13" viewBox="0 0 16 13"><rect x="0.6" y="6.6" width="9.8" height="3.8" fill="none" stroke="#222" stroke-width="1.1"/><path d="M11.5 8.5H14" stroke="#B8860B" stroke-width="1"/><path d="M11 5.5L13 3.5M9.5 4V1.5" stroke="#B8860B" stroke-width="1"/></svg>
<div style="left:1563px;top:121px;width:347px;height:19px;background:#FFFFFF;border:1px solid #9AA7D0;box-sizing:content-box;"></div>
<div style="left:1900px;top:122px;width:1px;height:19px;background:#B4BEE0;"></div>
<span class="t" style="left:1567px;top:123.84px;font-size:12px;line-height:16px;color:#6d6d6d;letter-spacing:-0.159px;">Search Solution Explorer (Ctrl+;)</span>
<svg style="left:1884px;top:124px;" width="14" height="14" viewBox="0 0 14 14"><circle cx="8.5" cy="5.5" r="3.6" fill="none" stroke="#555" stroke-width="1.6"/><path d="M6 8L1.5 12.5" stroke="#555" stroke-width="2.2"/></svg>
<svg style="left:1903px;top:130px;" width="6" height="3" viewBox="0 0 6 3"><path d="M0 0H6L3.0 3Z" fill="#1e1e1e"/></svg>
<div style="left:1562px;top:142px;width:351px;height:609px;background:#F7F9FE;"></div>
<div style="left:1562px;top:163px;width:351px;height:19px;background:#E6E7ED;"></div>
<svg style="left:1567px;top:150px;" width="6" height="8" viewBox="0 0 6 8"><rect x="0.5" y="3.5" width="5" height="4" fill="none" stroke="#1565C0" stroke-width="1.1"/><path d="M1.5 3.5V2A1.5 1.5 0 0 1 4.5 2V3.5" fill="none" stroke="#1565C0" stroke-width="1"/></svg>
<svg style="left:1577px;top:146px;" width="16" height="16" viewBox="0 0 16 16"><rect x="0.6" y="0.6" width="13.8" height="11" fill="#fff" stroke="#333" stroke-width="1.1"/><path d="M0.6 3H14.4" stroke="#333" stroke-width="1.4"/><path d="M11.5 6L14.5 7.2V14.6L11.5 15.8L7.5 12L5.8 13.3L5 12.8V9L5.8 8.5L7.5 9.8Z M11.5 9L9 10.9L11.5 12.8Z" fill="#865FC5" fill-rule="evenodd"/></svg>
<span class="t" style="left:1597px;top:146.14px;font-size:12px;line-height:16px;color:#1e1e1e;letter-spacing:-0.112px;">Solution 'BackendTest1' (1 of 1 project)</span>
<svg style="left:1572px;top:170px;" width="7" height="7" viewBox="0 0 7 7"><path d="M7 0V7H0Z" fill="#1e1e1e"/></svg>
<svg style="left:1585px;top:169px;" width="6" height="8" viewBox="0 0 6 8"><rect x="0.5" y="3.5" width="5" height="4" fill="none" stroke="#1565C0" stroke-width="1.1"/><path d="M1.5 3.5V2A1.5 1.5 0 0 1 4.5 2V3.5" fill="none" stroke="#1565C0" stroke-width="1"/></svg>
<svg style="left:1593px;top:165px;" width="17" height="16" viewBox="0 0 17 16"><rect x="4.6" y="1.6" width="11.8" height="10.8" fill="#fff" stroke="#333" stroke-width="1.1"/><path d="M4.6 4H16.4" stroke="#333" stroke-width="1.4"/><circle cx="5.5" cy="11" r="5" fill="#1565C0"/><path d="M1 11H10M5.5 6.5V15.5M2.3 8.7H8.7M2.3 13.3H8.7" stroke="#C9D8F5" stroke-width="0.6" opacity="0.75"/><ellipse cx="5.5" cy="11" rx="2.3" ry="4.6" fill="none" stroke="#C9D8F5" stroke-width="0.6" opacity="0.75"/></svg>
<span class="t" style="left:1615.2px;top:165.14px;font-size:12px;line-height:16px;color:#1e1e1e;letter-spacing:-0.365px;font-weight:bold;">BackendApiTest1</span>
<svg style="left:1591px;top:187px;" width="6" height="10" viewBox="0 0 6 10"><path d="M0.7 0.9L5.3 5L0.7 9.1Z" fill="none" stroke="#222" stroke-width="1.1"/></svg>
<svg style="left:1612px;top:185px;" width="16" height="14" viewBox="0 0 16 14"><path d="M4 10.5H3.5A3 3 0 0 1 3.5 4.8A4.5 4.5 0 0 1 12 4A3.3 3.3 0 0 1 12.5 10.5H12" fill="none" stroke="#1E9E9E" stroke-width="1.1"/><path d="M6 6.5V5M10 6.5V5M5.5 6.5H10.5V9A2.5 2.5 0 0 1 5.5 9ZM8 11.5V13.5" fill="none" stroke="#1E9E9E" stroke-width="1.1"/></svg>
<span class="t" style="left:1633.2px;top:184.14px;font-size:12px;line-height:16px;color:#1e1e1e;letter-spacing:-0.27px;">Connected Services</span>
<svg style="left:1591px;top:206px;" width="6" height="10" viewBox="0 0 6 10"><path d="M0.7 0.9L5.3 5L0.7 9.1Z" fill="none" stroke="#222" stroke-width="1.1"/></svg>
<svg style="left:1612px;top:205px;" width="16" height="12" viewBox="0 0 16 12"><rect x="0.6" y="3.6" width="4.8" height="4.8" fill="none" stroke="#333" stroke-width="1.1"/><rect x="8.6" y="0.6" width="4.8" height="4.8" fill="none" stroke="#333" stroke-width="1.1"/><rect x="7.6" y="7" width="4.4" height="4.4" fill="none" stroke="#333" stroke-width="1.1"/><path d="M5.5 6H8.5M11 5.5V7" stroke="#333" stroke-width="1"/><path d="M0.5 9.5H3.5" stroke="#333"/></svg>
<span class="t" style="left:1633.2px;top:203.14px;font-size:12px;line-height:16px;color:#1e1e1e;letter-spacing:-0.266px;">Dependencies</span>
<svg style="left:1603px;top:226px;" width="6" height="8" viewBox="0 0 6 8"><rect x="0.5" y="3.5" width="5" height="4" fill="none" stroke="#1565C0" stroke-width="1.1"/><path d="M1.5 3.5V2A1.5 1.5 0 0 1 4.5 2V3.5" fill="none" stroke="#1565C0" stroke-width="1"/></svg>
<svg style="left:1612px;top:223px;" width="16" height="15" viewBox="0 0 16 15"><path d="M3 1.5H8L9 3H15V11.5H3Z" fill="#DCB67A" stroke="#9A6F1A" stroke-width="1"/><path d="M1 6L7 12.5" stroke="#222" stroke-width="2.2"/><circle cx="2.5" cy="7.2" r="2" fill="#222"/></svg>
<span class="t" style="left:1633.2px;top:222.14px;font-size:12px;line-height:16px;color:#1e1e1e;letter-spacing:0.025px;">My Project</span>
<svg style="left:1591px;top:244px;" width="6" height="10" viewBox="0 0 6 10"><path d="M0.7 0.9L5.3 5L0.7 9.1Z" fill="none" stroke="#222" stroke-width="1.1"/></svg>
<svg style="left:1603px;top:245px;" width="6" height="8" viewBox="0 0 6 8"><rect x="0.5" y="3.5" width="5" height="4" fill="none" stroke="#1565C0" stroke-width="1.1"/><path d="M1.5 3.5V2A1.5 1.5 0 0 1 4.5 2V3.5" fill="none" stroke="#1565C0" stroke-width="1"/></svg>
<span class="t" style="left:1613px;top:243.36px;font-size:10.5px;line-height:12px;color:#1565C0;letter-spacing:-0.1px;font-weight:bold;">VB</span>
<span class="t" style="left:1633.2px;top:241.14px;font-size:12px;line-height:16px;color:#1e1e1e;letter-spacing:-0.417px;">Aes.vb</span>
<svg style="left:1603px;top:264px;" width="6" height="8" viewBox="0 0 6 8"><rect x="0.5" y="3.5" width="5" height="4" fill="none" stroke="#1565C0" stroke-width="1.1"/><path d="M1.5 3.5V2A1.5 1.5 0 0 1 4.5 2V3.5" fill="none" stroke="#1565C0" stroke-width="1"/></svg>
<svg style="left:1614px;top:261px;" width="12" height="14" viewBox="0 0 12 14"><path d="M0.6 0.6H8L11.4 4V13.4H0.6Z" fill="#fff" stroke="#333" stroke-width="1.1"/><path d="M7.8 0.6V4.2H11.4" fill="none" stroke="#333" stroke-width="1"/><path d="M2.8 6H9.2M2.8 8.3H9.2M2.8 10.6H9.2" stroke="#333" stroke-width="1"/></svg>
<span class="t" style="left:1633.2px;top:260.14px;font-size:12px;line-height:16px;color:#1e1e1e;letter-spacing:0.111px;">Blkid.txt</span>
<svg style="left:1603px;top:283px;" width="6" height="8" viewBox="0 0 6 8"><rect x="0.5" y="3.5" width="5" height="4" fill="none" stroke="#1565C0" stroke-width="1.1"/><path d="M1.5 3.5V2A1.5 1.5 0 0 1 4.5 2V3.5" fill="none" stroke="#1565C0" stroke-width="1"/></svg>
<svg style="left:1614px;top:280px;" width="12" height="14" viewBox="0 0 12 14"><path d="M0.6 0.6H8L11.4 4V13.4H0.6Z" fill="#fff" stroke="#333" stroke-width="1.1"/><path d="M7.8 0.6V4.2H11.4" fill="none" stroke="#333" stroke-width="1"/><path d="M2.8 6H9.2M2.8 8.3H9.2M2.8 10.6H9.2" stroke="#333" stroke-width="1"/></svg>
<span class="t" style="left:1633.2px;top:279.14px;font-size:12px;line-height:16px;color:#1e1e1e;letter-spacing:-0.037px;">BrCtlShowMac.txt</span>
<svg style="left:1591px;top:301px;" width="6" height="10" viewBox="0 0 6 10"><path d="M0.7 0.9L5.3 5L0.7 9.1Z" fill="none" stroke="#222" stroke-width="1.1"/></svg>
<svg style="left:1603px;top:302px;" width="6" height="8" viewBox="0 0 6 8"><rect x="0.5" y="3.5" width="5" height="4" fill="none" stroke="#1565C0" stroke-width="1.1"/><path d="M1.5 3.5V2A1.5 1.5 0 0 1 4.5 2V3.5" fill="none" stroke="#1565C0" stroke-width="1"/></svg>
<span class="t" style="left:1613px;top:300.36px;font-size:10.5px;line-height:12px;color:#1565C0;letter-spacing:-0.1px;font-weight:bold;">VB</span>
<span class="t" style="left:1633.2px;top:298.14px;font-size:12px;line-height:16px;color:#1e1e1e;letter-spacing:0.226px;">Common.vb</span>
<svg style="left:1591px;top:320px;" width="6" height="10" viewBox="0 0 6 10"><path d="M0.7 0.9L5.3 5L0.7 9.1Z" fill="none" stroke="#222" stroke-width="1.1"/></svg>
<svg style="left:1603px;top:321px;" width="6" height="8" viewBox="0 0 6 8"><rect x="0.5" y="3.5" width="5" height="4" fill="none" stroke="#1565C0" stroke-width="1.1"/><path d="M1.5 3.5V2A1.5 1.5 0 0 1 4.5 2V3.5" fill="none" stroke="#1565C0" stroke-width="1"/></svg>
<span class="t" style="left:1613px;top:319.36px;font-size:10.5px;line-height:12px;color:#1565C0;letter-spacing:-0.1px;font-weight:bold;">VB</span>
<span class="t" style="left:1633.2px;top:317.14px;font-size:12px;line-height:16px;color:#1e1e1e;letter-spacing:0.038px;">Container.vb</span>
<svg style="left:1591px;top:339px;" width="6" height="10" viewBox="0 0 6 10"><path d="M0.7 0.9L5.3 5L0.7 9.1Z" fill="none" stroke="#222" stroke-width="1.1"/></svg>
<svg style="left:1603px;top:340px;" width="6" height="8" viewBox="0 0 6 8"><rect x="0.5" y="3.5" width="5" height="4" fill="none" stroke="#1565C0" stroke-width="1.1"/><path d="M1.5 3.5V2A1.5 1.5 0 0 1 4.5 2V3.5" fill="none" stroke="#1565C0" stroke-width="1"/></svg>
<span class="t" style="left:1613px;top:338.36px;font-size:10.5px;line-height:12px;color:#1565C0;letter-spacing:-0.1px;font-weight:bold;">VB</span>
<span class="t" style="left:1633.2px;top:336.14px;font-size:12px;line-height:16px;color:#1e1e1e;letter-spacing:-0.129px;">Datacenter.vb</span>
<svg style="left:1591px;top:358px;" width="6" height="10" viewBox="0 0 6 10"><path d="M0.7 0.9L5.3 5L0.7 9.1Z" fill="none" stroke="#222" stroke-width="1.1"/></svg>
<svg style="left:1603px;top:359px;" width="6" height="8" viewBox="0 0 6 8"><rect x="0.5" y="3.5" width="5" height="4" fill="none" stroke="#1565C0" stroke-width="1.1"/><path d="M1.5 3.5V2A1.5 1.5 0 0 1 4.5 2V3.5" fill="none" stroke="#1565C0" stroke-width="1"/></svg>
<span class="t" style="left:1613px;top:357.36px;font-size:10.5px;line-height:12px;color:#1565C0;letter-spacing:-0.1px;font-weight:bold;">VB</span>
<span class="t" style="left:1633.2px;top:355.14px;font-size:12px;line-height:16px;color:#1e1e1e;letter-spacing:-0.073px;">DbMasternode.vb</span>
<svg style="left:1591px;top:377px;" width="6" height="10" viewBox="0 0 6 10"><path d="M0.7 0.9L5.3 5L0.7 9.1Z" fill="none" stroke="#222" stroke-width="1.1"/></svg>
<svg style="left:1603px;top:378px;" width="6" height="8" viewBox="0 0 6 8"><rect x="0.5" y="3.5" width="5" height="4" fill="none" stroke="#1565C0" stroke-width="1.1"/><path d="M1.5 3.5V2A1.5 1.5 0 0 1 4.5 2V3.5" fill="none" stroke="#1565C0" stroke-width="1"/></svg>
<span class="t" style="left:1613px;top:376.36px;font-size:10.5px;line-height:12px;color:#1565C0;letter-spacing:-0.1px;font-weight:bold;">VB</span>
<span class="t" style="left:1633.2px;top:374.14px;font-size:12px;line-height:16px;color:#1e1e1e;letter-spacing:-0.076px;">DeployVm.vb</span>
<svg style="left:1591px;top:396px;" width="6" height="10" viewBox="0 0 6 10"><path d="M0.7 0.9L5.3 5L0.7 9.1Z" fill="none" stroke="#222" stroke-width="1.1"/></svg>
<svg style="left:1603px;top:398px;" width="8" height="6" viewBox="0 0 8 6"><path d="M0.5 3L2.8 5.2L7.5 0.8" fill="none" stroke="#D32F2F" stroke-width="1.3"/></svg>
<span class="t" style="left:1613px;top:395.36px;font-size:10.5px;line-height:12px;color:#1565C0;letter-spacing:-0.1px;font-weight:bold;">VB</span>
<span class="t" style="left:1633.2px;top:393.14px;font-size:12px;line-height:16px;color:#1e1e1e;letter-spacing:-0.107px;">Docker.vb</span>
<svg style="left:1603px;top:417px;" width="8" height="6" viewBox="0 0 8 6"><path d="M0.5 3L2.8 5.2L7.5 0.8" fill="none" stroke="#D32F2F" stroke-width="1.3"/></svg>
<svg style="left:1614px;top:413px;" width="12" height="14" viewBox="0 0 12 14"><path d="M0.6 0.6H8L11.4 4V13.4H0.6Z" fill="#fff" stroke="#333" stroke-width="1.1"/><path d="M7.8 0.6V4.2H11.4" fill="none" stroke="#333" stroke-width="1"/><path d="M2.8 6H9.2M2.8 8.3H9.2M2.8 10.6H9.2" stroke="#333" stroke-width="1"/></svg>
<span class="t" style="left:1633.2px;top:412.14px;font-size:12px;line-height:16px;color:#1e1e1e;letter-spacing:0.016px;">IpA1.txt</span>
<svg style="left:1603px;top:435px;" width="6" height="8" viewBox="0 0 6 8"><rect x="0.5" y="3.5" width="5" height="4" fill="none" stroke="#1565C0" stroke-width="1.1"/><path d="M1.5 3.5V2A1.5 1.5 0 0 1 4.5 2V3.5" fill="none" stroke="#1565C0" stroke-width="1"/></svg>
<svg style="left:1614px;top:432px;" width="12" height="14" viewBox="0 0 12 14"><path d="M0.6 0.6H8L11.4 4V13.4H0.6Z" fill="#fff" stroke="#333" stroke-width="1.1"/><path d="M7.8 0.6V4.2H11.4" fill="none" stroke="#333" stroke-width="1"/><path d="M2.8 6H9.2M2.8 8.3H9.2M2.8 10.6H9.2" stroke="#333" stroke-width="1"/></svg>
<span class="t" style="left:1633.2px;top:431.14px;font-size:12px;line-height:16px;color:#1e1e1e;letter-spacing:0.016px;">IpA2.txt</span>
<svg style="left:1591px;top:453px;" width="6" height="10" viewBox="0 0 6 10"><path d="M0.7 0.9L5.3 5L0.7 9.1Z" fill="none" stroke="#222" stroke-width="1.1"/></svg>
<svg style="left:1603px;top:454px;" width="6" height="8" viewBox="0 0 6 8"><rect x="0.5" y="3.5" width="5" height="4" fill="none" stroke="#1565C0" stroke-width="1.1"/><path d="M1.5 3.5V2A1.5 1.5 0 0 1 4.5 2V3.5" fill="none" stroke="#1565C0" stroke-width="1"/></svg>
<span class="t" style="left:1613px;top:452.36px;font-size:10.5px;line-height:12px;color:#1565C0;letter-spacing:-0.1px;font-weight:bold;">VB</span>
<span class="t" style="left:1633.2px;top:450.14px;font-size:12px;line-height:16px;color:#1e1e1e;letter-spacing:-0.152px;">KvmDiskOperationTest.vb</span>
<svg style="left:1591px;top:472px;" width="6" height="10" viewBox="0 0 6 10"><path d="M0.7 0.9L5.3 5L0.7 9.1Z" fill="none" stroke="#222" stroke-width="1.1"/></svg>
<svg style="left:1603px;top:473px;" width="6" height="8" viewBox="0 0 6 8"><rect x="0.5" y="3.5" width="5" height="4" fill="none" stroke="#1565C0" stroke-width="1.1"/><path d="M1.5 3.5V2A1.5 1.5 0 0 1 4.5 2V3.5" fill="none" stroke="#1565C0" stroke-width="1"/></svg>
<span class="t" style="left:1613px;top:471.36px;font-size:10.5px;line-height:12px;color:#1565C0;letter-spacing:-0.1px;font-weight:bold;">VB</span>
<span class="t" style="left:1633.2px;top:469.14px;font-size:12px;line-height:16px;color:#1e1e1e;letter-spacing:0.086px;">KvmInfo.vb</span>
<svg style="left:1591px;top:491px;" width="6" height="10" viewBox="0 0 6 10"><path d="M0.7 0.9L5.3 5L0.7 9.1Z" fill="none" stroke="#222" stroke-width="1.1"/></svg>
<svg style="left:1603px;top:492px;" width="6" height="8" viewBox="0 0 6 8"><rect x="0.5" y="3.5" width="5" height="4" fill="none" stroke="#1565C0" stroke-width="1.1"/><path d="M1.5 3.5V2A1.5 1.5 0 0 1 4.5 2V3.5" fill="none" stroke="#1565C0" stroke-width="1"/></svg>
<span class="t" style="left:1613px;top:490.36px;font-size:10.5px;line-height:12px;color:#1565C0;letter-spacing:-0.1px;font-weight:bold;">VB</span>
<span class="t" style="left:1633.2px;top:488.14px;font-size:12px;line-height:16px;color:#1e1e1e;letter-spacing:-0.001px;">KvmOperation.vb</span>
<svg style="left:1591px;top:510px;" width="6" height="10" viewBox="0 0 6 10"><path d="M0.7 0.9L5.3 5L0.7 9.1Z" fill="none" stroke="#222" stroke-width="1.1"/></svg>
<svg style="left:1603px;top:511px;" width="6" height="8" viewBox="0 0 6 8"><rect x="0.5" y="3.5" width="5" height="4" fill="none" stroke="#1565C0" stroke-width="1.1"/><path d="M1.5 3.5V2A1.5 1.5 0 0 1 4.5 2V3.5" fill="none" stroke="#1565C0" stroke-width="1"/></svg>
<span class="t" style="left:1613px;top:509.36px;font-size:10.5px;line-height:12px;color:#1565C0;letter-spacing:-0.1px;font-weight:bold;">VB</span>
<span class="t" style="left:1633.2px;top:507.14px;font-size:12px;line-height:16px;color:#1e1e1e;letter-spacing:-0.087px;">KvmVm.vb</span>
<svg style="left:1603px;top:530px;" width="6" height="8" viewBox="0 0 6 8"><rect x="0.5" y="3.5" width="5" height="4" fill="none" stroke="#1565C0" stroke-width="1.1"/><path d="M1.5 3.5V2A1.5 1.5 0 0 1 4.5 2V3.5" fill="none" stroke="#1565C0" stroke-width="1"/></svg>
<svg style="left:1614px;top:527px;" width="12" height="14" viewBox="0 0 12 14"><path d="M0.6 0.6H8L11.4 4V13.4H0.6Z" fill="#fff" stroke="#333" stroke-width="1.1"/><path d="M7.8 0.6V4.2H11.4" fill="none" stroke="#333" stroke-width="1"/><path d="M2.8 6H9.2M2.8 8.3H9.2M2.8 10.6H9.2" stroke="#333" stroke-width="1"/></svg>
<span class="t" style="left:1633.2px;top:526.14px;font-size:12px;line-height:16px;color:#1e1e1e;letter-spacing:-0.014px;">Lsblk.txt</span>
<svg style="left:1603px;top:549px;" width="6" height="8" viewBox="0 0 6 8"><rect x="0.5" y="3.5" width="5" height="4" fill="none" stroke="#1565C0" stroke-width="1.1"/><path d="M1.5 3.5V2A1.5 1.5 0 0 1 4.5 2V3.5" fill="none" stroke="#1565C0" stroke-width="1"/></svg>
<svg style="left:1614px;top:546px;" width="12" height="14" viewBox="0 0 12 14"><path d="M0.6 0.6H8L11.4 4V13.4H0.6Z" fill="#fff" stroke="#333" stroke-width="1.1"/><path d="M7.8 0.6V4.2H11.4" fill="none" stroke="#333" stroke-width="1"/><path d="M2.8 6H9.2M2.8 8.3H9.2M2.8 10.6H9.2" stroke="#333" stroke-width="1"/></svg>
<span class="t" style="left:1633.2px;top:545.14px;font-size:12px;line-height:16px;color:#1e1e1e;letter-spacing:-0.037px;">Lvdisplay.txt</span>
<svg style="left:1591px;top:567px;" width="6" height="10" viewBox="0 0 6 10"><path d="M0.7 0.9L5.3 5L0.7 9.1Z" fill="none" stroke="#222" stroke-width="1.1"/></svg>
<svg style="left:1603px;top:568px;" width="6" height="8" viewBox="0 0 6 8"><rect x="0.5" y="3.5" width="5" height="4" fill="none" stroke="#1565C0" stroke-width="1.1"/><path d="M1.5 3.5V2A1.5 1.5 0 0 1 4.5 2V3.5" fill="none" stroke="#1565C0" stroke-width="1"/></svg>
<span class="t" style="left:1613px;top:566.36px;font-size:10.5px;line-height:12px;color:#1565C0;letter-spacing:-0.1px;font-weight:bold;">VB</span>
<span class="t" style="left:1633.2px;top:564.14px;font-size:12px;line-height:16px;color:#1e1e1e;letter-spacing:0.224px;">Notification.vb</span>
<svg style="left:1591px;top:586px;" width="6" height="10" viewBox="0 0 6 10"><path d="M0.7 0.9L5.3 5L0.7 9.1Z" fill="none" stroke="#222" stroke-width="1.1"/></svg>
<svg style="left:1603px;top:588px;" width="7" height="7" viewBox="0 0 7 7"><path d="M3.5 0.5V6.5M0.5 3.5H6.5" stroke="#2E9E2E" stroke-width="1.3"/></svg>
<span class="t" style="left:1613px;top:585.36px;font-size:10.5px;line-height:12px;color:#1565C0;letter-spacing:-0.1px;font-weight:bold;">VB</span>
<span class="t" style="left:1633.2px;top:583.14px;font-size:12px;line-height:16px;color:#1e1e1e;letter-spacing:-0.22px;">ProjectState.vb</span>
<svg style="left:1603px;top:606px;" width="6" height="8" viewBox="0 0 6 8"><rect x="0.5" y="3.5" width="5" height="4" fill="none" stroke="#1565C0" stroke-width="1.1"/><path d="M1.5 3.5V2A1.5 1.5 0 0 1 4.5 2V3.5" fill="none" stroke="#1565C0" stroke-width="1"/></svg>
<svg style="left:1614px;top:603px;" width="12" height="14" viewBox="0 0 12 14"><path d="M0.6 0.6H8L11.4 4V13.4H0.6Z" fill="#fff" stroke="#333" stroke-width="1.1"/><path d="M7.8 0.6V4.2H11.4" fill="none" stroke="#333" stroke-width="1"/><path d="M2.8 6H9.2M2.8 8.3H9.2M2.8 10.6H9.2" stroke="#333" stroke-width="1"/></svg>
<span class="t" style="left:1633.2px;top:602.14px;font-size:12px;line-height:16px;color:#1e1e1e;letter-spacing:-0.201px;">Pvs.txt</span>
<svg style="left:1591px;top:624px;" width="6" height="10" viewBox="0 0 6 10"><path d="M0.7 0.9L5.3 5L0.7 9.1Z" fill="none" stroke="#222" stroke-width="1.1"/></svg>
<svg style="left:1603px;top:625px;" width="6" height="8" viewBox="0 0 6 8"><rect x="0.5" y="3.5" width="5" height="4" fill="none" stroke="#1565C0" stroke-width="1.1"/><path d="M1.5 3.5V2A1.5 1.5 0 0 1 4.5 2V3.5" fill="none" stroke="#1565C0" stroke-width="1"/></svg>
<span class="t" style="left:1613px;top:623.36px;font-size:10.5px;line-height:12px;color:#1565C0;letter-spacing:-0.1px;font-weight:bold;">VB</span>
<span class="t" style="left:1633.2px;top:621.14px;font-size:12px;line-height:16px;color:#1e1e1e;letter-spacing:-0.163px;">Registry.vb</span>
<svg style="left:1603px;top:644px;" width="6" height="8" viewBox="0 0 6 8"><rect x="0.5" y="3.5" width="5" height="4" fill="none" stroke="#1565C0" stroke-width="1.1"/><path d="M1.5 3.5V2A1.5 1.5 0 0 1 4.5 2V3.5" fill="none" stroke="#1565C0" stroke-width="1"/></svg>
<svg style="left:1614px;top:641px;" width="12" height="14" viewBox="0 0 12 14"><path d="M0.6 0.6H8L11.4 4V13.4H0.6Z" fill="#fff" stroke="#333" stroke-width="1.1"/><path d="M7.8 0.6V4.2H11.4" fill="none" stroke="#333" stroke-width="1"/><path d="M2.8 6H9.2M2.8 8.3H9.2M2.8 10.6H9.2" stroke="#333" stroke-width="1"/></svg>
<span class="t" style="left:1633.2px;top:640.14px;font-size:12px;line-height:16px;color:#1e1e1e;letter-spacing:-0.185px;">TestEmail.txt</span>
<svg style="left:1591px;top:662px;" width="6" height="10" viewBox="0 0 6 10"><path d="M0.7 0.9L5.3 5L0.7 9.1Z" fill="none" stroke="#222" stroke-width="1.1"/></svg>
<svg style="left:1603px;top:663px;" width="6" height="8" viewBox="0 0 6 8"><rect x="0.5" y="3.5" width="5" height="4" fill="none" stroke="#1565C0" stroke-width="1.1"/><path d="M1.5 3.5V2A1.5 1.5 0 0 1 4.5 2V3.5" fill="none" stroke="#1565C0" stroke-width="1"/></svg>
<span class="t" style="left:1613px;top:661.36px;font-size:10.5px;line-height:12px;color:#1565C0;letter-spacing:-0.1px;font-weight:bold;">VB</span>
<span class="t" style="left:1633.2px;top:659.14px;font-size:12px;line-height:16px;color:#1e1e1e;letter-spacing:-0.33px;">User.vb</span>
<svg style="left:1591px;top:681px;" width="6" height="10" viewBox="0 0 6 10"><path d="M0.7 0.9L5.3 5L0.7 9.1Z" fill="none" stroke="#222" stroke-width="1.1"/></svg>
<svg style="left:1603px;top:682px;" width="6" height="8" viewBox="0 0 6 8"><rect x="0.5" y="3.5" width="5" height="4" fill="none" stroke="#1565C0" stroke-width="1.1"/><path d="M1.5 3.5V2A1.5 1.5 0 0 1 4.5 2V3.5" fill="none" stroke="#1565C0" stroke-width="1"/></svg>
<span class="t" style="left:1613px;top:680.36px;font-size:10.5px;line-height:12px;color:#1565C0;letter-spacing:-0.1px;font-weight:bold;">VB</span>
<span class="t" style="left:1633.2px;top:678.14px;font-size:12px;line-height:16px;color:#1e1e1e;letter-spacing:-0.236px;">VmImageTest.vb</span>
<svg style="left:1591px;top:700px;" width="6" height="10" viewBox="0 0 6 10"><path d="M0.7 0.9L5.3 5L0.7 9.1Z" fill="none" stroke="#222" stroke-width="1.1"/></svg>
<svg style="left:1603px;top:701px;" width="6" height="8" viewBox="0 0 6 8"><rect x="0.5" y="3.5" width="5" height="4" fill="none" stroke="#1565C0" stroke-width="1.1"/><path d="M1.5 3.5V2A1.5 1.5 0 0 1 4.5 2V3.5" fill="none" stroke="#1565C0" stroke-width="1"/></svg>
<span class="t" style="left:1613px;top:699.36px;font-size:10.5px;line-height:12px;color:#1565C0;letter-spacing:-0.1px;font-weight:bold;">VB</span>
<span class="t" style="left:1633.2px;top:697.14px;font-size:12px;line-height:16px;color:#1e1e1e;letter-spacing:-0.063px;">VmMasternode.vb</span>
<svg style="left:1591px;top:719px;" width="6" height="10" viewBox="0 0 6 10"><path d="M0.7 0.9L5.3 5L0.7 9.1Z" fill="none" stroke="#222" stroke-width="1.1"/></svg>
<svg style="left:1603px;top:720px;" width="6" height="8" viewBox="0 0 6 8"><rect x="0.5" y="3.5" width="5" height="4" fill="none" stroke="#1565C0" stroke-width="1.1"/><path d="M1.5 3.5V2A1.5 1.5 0 0 1 4.5 2V3.5" fill="none" stroke="#1565C0" stroke-width="1"/></svg>
<span class="t" style="left:1613px;top:718.36px;font-size:10.5px;line-height:12px;color:#1565C0;letter-spacing:-0.1px;font-weight:bold;">VB</span>
<span class="t" style="left:1633.2px;top:716.14px;font-size:12px;line-height:16px;color:#1e1e1e;letter-spacing:-0.031px;">VmOperation.vb</span>
<div style="left:1562px;top:751px;width:100px;height:20px;background:#F7F9FE;"></div>
<span class="t" style="left:1567px;top:752.84px;font-size:12px;line-height:16px;color:#1e1e1e;letter-spacing:-0.087px;">Solution Explorer</span>
<div style="left:1664px;top:752px;width:74px;height:17.5px;background:#40568D;"></div>
<span class="t" style="left:1669.6px;top:752.84px;font-size:12px;line-height:16px;color:#ffffff;letter-spacing:-0.33px;">Git Changes</span>
<div style="left:1740px;top:752px;width:65px;height:17.5px;background:#40568D;"></div>
<span class="t" style="left:1745.5px;top:752.84px;font-size:12px;line-height:16px;color:#ffffff;transform:scaleX(0.9216);transform-origin:0 0;">Class View</span>
<div style="left:1562px;top:779px;width:351px;height:21px;background:#40568D;"></div>
<span class="t" style="left:1566.3px;top:781.84px;font-size:12px;line-height:16px;color:#ffffff;letter-spacing:-0.222px;">Properties</span>
<svg style="left:1865px;top:787.5px;" width="8" height="4" viewBox="0 0 8 4"><path d="M0 0H8L4.0 4Z" fill="#B0BADC"/></svg>
<svg style="left:1881px;top:783.5px;" width="9" height="12" viewBox="0 0 9 12"><path d="M2.5 0.5H6.5V6.5H2.5ZM5.5 0.5V6.5M0.5 6.5H8.5M4.5 6.5V11.5" fill="none" stroke="#B0BADC" stroke-width="1"/></svg>
<svg style="left:1897px;top:784.5px;" width="10" height="10" viewBox="0 0 10 10"><path d="M0.5 0.5L9.5 9.5M9.5 0.5L0.5 9.5" stroke="#B0BADC" stroke-width="1.3"/></svg>
<div style="left:1562px;top:800px;width:351px;height:210px;background:#F7F9FE;"></div>
<svg style="left:1903px;top:811px;" width="6" height="3" viewBox="0 0 6 3"><path d="M0 0H6L3.0 3Z" fill="#1e1e1e"/></svg>
<div style="left:1563px;top:825px;width:349px;height:25px;background:#CCD5F0;"></div>
<div style="left:1565px;top:827px;width:20px;height:20px;background:#FDEFCB;border:1px solid #C28A1C;box-sizing:content-box;"></div>
<svg style="left:1568px;top:830px;" width="17" height="14" viewBox="0 0 17 14"><rect x="0.6" y="0.6" width="4.8" height="4.8" fill="none" stroke="#222" stroke-width="1.1"/><path d="M1.8 3H4.2M3 1.8V4.2" stroke="#222" stroke-width="0.9"/><rect x="0.6" y="8.6" width="4.8" height="4.8" fill="none" stroke="#222" stroke-width="1.1"/><path d="M1.8 11H4.2" stroke="#222" stroke-width="0.9"/><path d="M7 1.5H15M7 4.5H13M7 9.5H15M7 12.5H13" stroke="#222" stroke-width="1.1"/></svg>
<svg style="left:1591px;top:829px;" width="16" height="15" viewBox="0 0 16 15"><text x="0" y="6.5" font-family="Liberation Sans" font-size="8" font-weight="bold" fill="#222">A</text><text x="0.3" y="14" font-family="Liberation Sans" font-size="8" font-weight="bold" fill="#222">Z</text><path d="M11.5 1V13M8.5 10L11.5 13.3L14.5 10" fill="none" stroke="#1565C0" stroke-width="1.6"/></svg>
<div style="left:1614px;top:828px;width:1px;height:19px;background:#8E9BC6;"></div>
<svg style="left:1620px;top:829px;" width="16" height="16" viewBox="0 0 16 16"><path d="M1.5 14.5L8.5 7.5" stroke="#9A9A9A" stroke-width="2.4" stroke-linecap="round"/><path d="M14.8 4.2A4 4 0 1 1 11.3 1L9.3 3.3L10 5.5L12.3 6Z" fill="#9A9A9A"/></svg>
<div style="left:1563px;top:947px;width:349px;height:1px;background:#ECEEF5;"></div>
<div style="left:0px;top:1017px;width:1920px;height:24px;background:#40508D;"></div>
<svg style="left:4px;top:1021px;" width="17" height="16" viewBox="0 0 17 16"><path d="M0.7 0.7H15.3V11.3H8L5 14.5V11.3H0.7Z" fill="none" stroke="#fff" stroke-width="1.2"/></svg>
<span class="t" style="left:28.2px;top:1020.84px;font-size:12px;line-height:16px;color:#ffffff;transform:scaleX(0.9167);transform-origin:0 0;">Ready</span>
<svg style="left:1502px;top:1022px;" width="11" height="13" viewBox="0 0 11 13"><path d="M3 12.5V1M0.5 3.5L3 1L5.5 3.5M8 0.5V12M5.5 9.5L8 12L10.5 9.5" fill="none" stroke="#fff" stroke-width="1.2"/></svg>
<span class="t" style="left:1521.6px;top:1020.84px;font-size:12px;line-height:16px;color:#ffffff;letter-spacing:-0.345px;">12 / 0</span>
<svg style="left:1556px;top:1027px;" width="8" height="5" viewBox="0 0 8 5"><path d="M0 5L4 0L8 5Z" fill="#fff"/></svg>
<svg style="left:1587px;top:1022px;" width="13" height="13" viewBox="0 0 13 13"><path d="M1 12L2 8.5L9.5 1L12 3.5L4.5 11Z" fill="none" stroke="#fff" stroke-width="1.2"/></svg>
<span class="t" style="left:1608px;top:1020.84px;font-size:12px;line-height:16px;color:#ffffff;">3</span>
<svg style="left:1637px;top:1021px;" width="14" height="16" viewBox="0 0 14 16"><circle cx="3" cy="3" r="2" fill="none" stroke="#fff" stroke-width="1.1"/><circle cx="3" cy="13" r="2" fill="none" stroke="#fff" stroke-width="1.1"/><circle cx="11" cy="5" r="2" fill="none" stroke="#fff" stroke-width="1.1"/><path d="M3 5V11M11 7C11 10 3 8.5 3 11" fill="none" stroke="#fff" stroke-width="1.1"/></svg>
<span class="t" style="left:1658.7px;top:1020.84px;font-size:12px;line-height:16px;color:#ffffff;letter-spacing:-0.275px;">master</span>
<svg style="left:1700px;top:1027px;" width="8" height="5" viewBox="0 0 8 5"><path d="M0 5L4 0L8 5Z" fill="#fff"/></svg>
<svg style="left:1736px;top:1021px;" width="15" height="15" viewBox="0 0 15 15"><path d="M7.5 0.3L14.7 7.5L7.5 14.7L0.3 7.5Z" fill="#fff"/><path d="M5.5 3.5L9.5 7.5M7.5 5.5V11" stroke="#40508D" stroke-width="1.3"/><circle cx="7.5" cy="11" r="1.2" fill="#40508D"/><circle cx="10" cy="8" r="1.2" fill="#40508D"/></svg>
<span class="t" style="left:1758px;top:1020.84px;font-size:12px;line-height:16px;color:#ffffff;letter-spacing:-0.338px;">BackendApiTest1</span>
<svg style="left:1853px;top:1027px;" width="8" height="5" viewBox="0 0 8 5"><path d="M0 5L4 0L8 5Z" fill="#fff"/></svg>
<svg style="left:1882px;top:1021px;" width="14" height="15" viewBox="0 0 14 15"><path d="M2 11.5V6.5A5 5 0 0 1 12 6.5V11.5H0.8M5 13.5H9" fill="none" stroke="#fff" stroke-width="1.2"/></svg>
<div style="left:1890.5px;top:1026.5px;width:11px;height:11px;background:#E81123;border-radius:6px;"></div>
<span class="t" style="left:1893.2px;top:1027.21px;font-size:9.5px;line-height:11px;color:#ffffff;font-weight:bold;">2</span>
</body></html>
